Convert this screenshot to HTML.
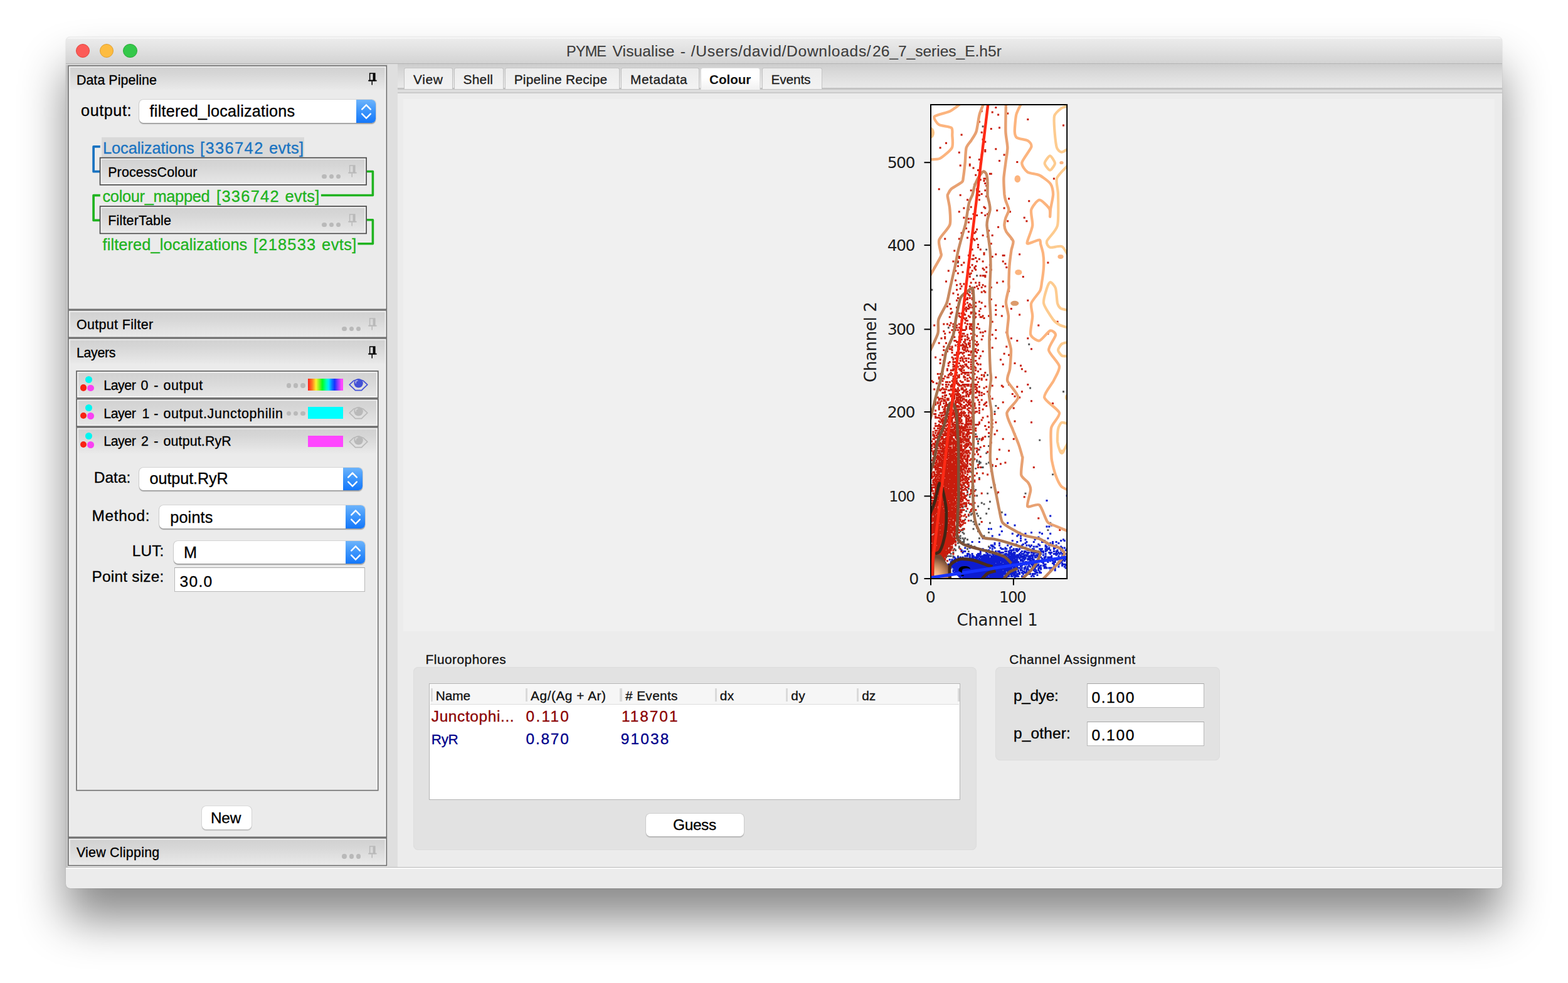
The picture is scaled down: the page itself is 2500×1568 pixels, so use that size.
<!DOCTYPE html>
<html lang="en"><head><meta charset="utf-8"><title>PYME Visualise</title>
<style>
html,body{margin:0;padding:0;background:#fff;}
body{width:2500px;height:1568px;position:relative;overflow:hidden;font-family:"Liberation Sans",sans-serif;}
.b{position:absolute;box-sizing:border-box;}
.t{position:absolute;white-space:pre;-webkit-text-stroke:0.32px currentColor;}
.t.dv{-webkit-text-stroke:0;}
.pane{background:#ebebeb;}
.hdr{background:linear-gradient(#d1d1d1,#d6d6d6 30%,#e9e9e9);}
.fold{background:linear-gradient(#d1d1d1,#d6d6d6 30%,#e8e8e8);}
.dd{background:#fff;border-radius:6.5px;box-shadow:0 0 0 0.8px rgba(0,0,0,.13),0 1.4px 1.2px rgba(0,0,0,.28);}
.ddb{background:linear-gradient(#6db4fb,#3f97fb 45%,#1477fa);border-radius:0 6.5px 6.5px 0;}
.inp{background:#fff;border:1.4px solid #b9b9b9;border-top-color:#a5a5a5;}
.btn{background:#fff;border-radius:6.5px;box-shadow:0 0 0 0.8px rgba(0,0,0,.10),0 1.2px 1.2px rgba(0,0,0,.16);}
.grp{background:#e2e2e2;border-radius:8px;box-shadow:inset 0 0 0 1px #dcdcdc;}
.tab{border:1px solid #c4c4c4;border-bottom:none;border-radius:3px 3px 0 0;background:linear-gradient(#ececec,#f3f3f3);}
</style></head>
<body>
<div class="b" style="left:105.00px;top:59.00px;width:2290.00px;height:1358.00px;background:#ececec;border-radius:7px 7px 7px 7px;box-shadow:0 50px 72px rgba(0,0,0,.46),0 0 1.2px rgba(0,0,0,.3);"></div>
<div class="b" style="left:105.00px;top:59.00px;width:2290.00px;height:42.00px;border-radius:7px 7px 0 0;background:linear-gradient(#e6e6e6,#f8f8f8 1px,#f6f6f6 2px,#ebebeb 3.5px,#e6e6e6 30%,#d4d4d4 96%,#d2d2d2);"></div>
<div class="b" style="left:105.00px;top:101.00px;width:2290.00px;height:1.00px;background:#b4b4b4;"></div>
<div class="b" style="left:120.80px;top:69.80px;width:22.60px;height:22.60px;border-radius:50%;background:#fc5b57;border:1px solid #e2463f;"></div>
<div class="b" style="left:158.60px;top:69.80px;width:22.60px;height:22.60px;border-radius:50%;background:#fdbc40;border:1px solid #e0a033;"></div>
<div class="b" style="left:196.30px;top:69.80px;width:22.60px;height:22.60px;border-radius:50%;background:#34c84a;border:1px solid #2aab38;"></div>
<span class="t" style="left:903.10px;top:67.00px;font:400 23.527336860670196px/31px 'Liberation Sans',sans-serif;letter-spacing:-0.900px;color:#3c3c3c;-webkit-text-stroke:0.12px currentColor;">PYME</span><span class="t" style="left:976.50px;top:66.00px;font:400 24.6px/32px 'Liberation Sans',sans-serif;letter-spacing:0.109px;color:#3c3c3c;-webkit-text-stroke:0.12px currentColor;">Visualise</span><span class="t" style="left:1084.66px;top:66.00px;font:400 24.6px/32px 'Liberation Sans',sans-serif;letter-spacing:0.000px;color:#3c3c3c;-webkit-text-stroke:0.12px currentColor;">-</span><span class="t" style="left:1101.80px;top:66.00px;font:400 24.6px/32px 'Liberation Sans',sans-serif;letter-spacing:0.676px;color:#3c3c3c;-webkit-text-stroke:0.12px currentColor;">/Users/david/Downloads/</span><span class="t" style="left:1391.00px;top:66.00px;font:400 24.6px/32px 'Liberation Sans',sans-serif;letter-spacing:-0.039px;color:#3c3c3c;-webkit-text-stroke:0.12px currentColor;">26_7_series_E.h5r</span>
<div class="b" style="left:617.50px;top:102.00px;width:16.50px;height:1281.00px;background:#dfdfdf;"></div>
<div class="b" style="left:105.00px;top:102.00px;width:512.50px;height:2.00px;background:#d6d6d6;"></div>
<div class="b" style="left:105.00px;top:104.00px;width:3.20px;height:1279.00px;background:#c4c4c4;"></div>
<div class="b" style="left:634.00px;top:102.00px;width:1761.00px;height:47.00px;background:linear-gradient(#cdcdcd,#d8d8d8 25%,#e6e6e6 70%,#ebebeb);"></div>
<div class="b" style="left:634.00px;top:140.00px;width:1761.00px;height:3.00px;background:#c3c3c3;"></div>
<div class="b" style="left:634.00px;top:143.00px;width:1761.00px;height:4.00px;background:#dedede;"></div>
<div class="b" style="left:634.00px;top:147.00px;width:1761.00px;height:1.80px;background:#cbcbcb;"></div>
<div class="b tab" style="left:644.30px;top:108.00px;width:77.70px;height:34.00px;"></div>
<span class="t" style="left:659.00px;top:113.00px;font:400 20.9px/27px 'Liberation Sans',sans-serif;letter-spacing:0.604px;color:#1e1e1e;">View</span>
<div class="b tab" style="left:723.70px;top:108.00px;width:79.10px;height:34.00px;"></div>
<span class="t" style="left:738.60px;top:113.00px;font:400 20.9px/27px 'Liberation Sans',sans-serif;letter-spacing:0.212px;color:#1e1e1e;">Shell</span>
<div class="b tab" style="left:804.60px;top:108.00px;width:183.10px;height:34.00px;"></div>
<span class="t" style="left:819.70px;top:113.00px;font:400 20.9px/27px 'Liberation Sans',sans-serif;letter-spacing:0.239px;color:#1e1e1e;">Pipeline Recipe</span>
<div class="b tab" style="left:990.00px;top:108.00px;width:125.10px;height:34.00px;"></div>
<span class="t" style="left:1005.10px;top:113.00px;font:400 20.9px/27px 'Liberation Sans',sans-serif;letter-spacing:0.492px;color:#1e1e1e;">Metadata</span>
<div class="b" style="left:1116.60px;top:108.00px;width:95.90px;height:35.00px;border:1px solid #dcdcdc;border-bottom:none;border-radius:4px 4px 0 0;background:linear-gradient(#ffffff,#ffffff 45%,#f1f1f1);"></div>
<span class="t dv" style="left:1131.10px;top:113.00px;font:700 20.6px/27px 'Liberation Sans',sans-serif;letter-spacing:-0.017px;color:#111;">Colour</span>
<div class="b tab" style="left:1214.90px;top:108.00px;width:95.80px;height:34.00px;"></div>
<span class="t" style="left:1229.50px;top:113.00px;font:400 20.9px/27px 'Liberation Sans',sans-serif;letter-spacing:-0.160px;color:#1e1e1e;">Events</span>
<div class="b pane" style="left:108.20px;top:104.10px;width:509.00px;height:390.10px;"></div>
<div class="b hdr" style="left:109.80px;top:105.70px;width:505.80px;height:37.50px;"></div>
<span class="t" style="left:121.90px;top:114.00px;font:400 21.4px/28px 'Liberation Sans',sans-serif;letter-spacing:0.069px;color:#000;">Data Pipeline</span>
<svg class="b" style="left:586.00px;top:116.10px" width="16" height="22" viewBox="0 0 16 22"><path d="M3.6 1.1h8.2v11.3h-8.2z" fill="none" stroke="#000" stroke-width="1.5"/><path d="M8.6 1.1h3.2v11.3h-3.2z" fill="#000"/><path d="M1.2 12.6h13.4" stroke="#000" stroke-width="1.9"/><path d="M7.2 13.4v6.2" stroke="#000" stroke-width="1.5"/></svg>
<span class="t" style="left:129.10px;top:160.00px;font:400 25.2px/33px 'Liberation Sans',sans-serif;letter-spacing:0.558px;color:#000;">output:</span>
<div class="b dd" style="left:222.40px;top:158.70px;width:376.60px;height:36.90px;"></div>
<div class="b ddb" style="left:568.00px;top:158.70px;width:31.00px;height:36.90px;"></div>
<svg class="b" style="left:571.50px;top:158.70px" width="24" height="36.90" viewBox="0 0 24 36.90"><path d="M5.2 15.4L12 8.5L18.8 15.4M5.2 22.6L12 29.5L18.8 22.6" fill="none" stroke="#fff" stroke-width="2.4" stroke-linecap="round" stroke-linejoin="miter"/></svg>
<span class="t" style="left:238.60px;top:161.00px;font:400 25.2px/33px 'Liberation Sans',sans-serif;letter-spacing:0.227px;color:#000;">filtered_localizations</span>
<div class="b" style="left:162.20px;top:218.60px;width:322.80px;height:32.20px;background:#d9d9d9;"></div>
<span class="t" style="left:164.00px;top:220.00px;font:400 25.4px/33px 'Liberation Sans',sans-serif;letter-spacing:-0.090px;color:#1a73c1;">Localizations</span><span class="t" style="left:319.00px;top:220.00px;font:400 25.4px/33px 'Liberation Sans',sans-serif;letter-spacing:1.413px;color:#1a73c1;">[336742</span><span class="t" style="left:429.00px;top:220.00px;font:400 25.4px/33px 'Liberation Sans',sans-serif;letter-spacing:0.336px;color:#1a73c1;">evts]</span>
<svg class="b" style="left:140px;top:225px" width="470" height="175" viewBox="140 225 470 175"><path d="M159.8 233.9H149.1V273.7H159.8" fill="none" stroke="#1a73c1" stroke-width="3.7" stroke-linejoin="round"/><path d="M583.5 273.5H594.4V311.5H511.9" fill="none" stroke="#1fb31f" stroke-width="3.6" stroke-linejoin="round"/><path d="M159.8 311.6H149.1V351.4H159.8" fill="none" stroke="#1fb31f" stroke-width="3.7" stroke-linejoin="round"/><path d="M583.5 350.7H594.4V388.7H570.4" fill="none" stroke="#1fb31f" stroke-width="3.6" stroke-linejoin="round"/></svg>
<div class="b fold" style="left:158.70px;top:250.80px;width:426.20px;height:44.90px;"></div>
<span class="t" style="left:172.20px;top:261.00px;font:400 21.4px/28px 'Liberation Sans',sans-serif;letter-spacing:0.164px;color:#000;">ProcessColour</span>
<div class="b" style="left:513.30px;top:277.60px;width:7.40px;height:7.40px;border-radius:50%;background:#b9b9b9;"></div>
<div class="b" style="left:524.60px;top:277.60px;width:7.40px;height:7.40px;border-radius:50%;background:#b9b9b9;"></div>
<div class="b" style="left:535.90px;top:277.60px;width:7.40px;height:7.40px;border-radius:50%;background:#b9b9b9;"></div>
<svg class="b" style="left:553.50px;top:263.20px" width="16" height="22" viewBox="0 0 16 22"><path d="M3.6 1.1h8.2v11.3h-8.2z" fill="none" stroke="#b9b9b9" stroke-width="1.5"/><path d="M8.6 1.1h3.2v11.3h-3.2z" fill="#b9b9b9"/><path d="M1.2 12.6h13.4" stroke="#b9b9b9" stroke-width="1.9"/><path d="M7.2 13.4v6.2" stroke="#b9b9b9" stroke-width="1.5"/></svg>
<span class="t" style="left:163.50px;top:297.00px;font:400 25.4px/33px 'Liberation Sans',sans-serif;letter-spacing:-0.328px;color:#1fb31f;">colour_mapped</span><span class="t" style="left:345.10px;top:297.00px;font:400 25.4px/33px 'Liberation Sans',sans-serif;letter-spacing:1.296px;color:#1fb31f;">[336742</span><span class="t" style="left:454.60px;top:297.00px;font:400 25.4px/33px 'Liberation Sans',sans-serif;letter-spacing:0.286px;color:#1fb31f;">evts]</span>
<div class="b fold" style="left:158.70px;top:328.20px;width:426.20px;height:45.10px;"></div>
<span class="t" style="left:172.20px;top:338.00px;font:400 21.4px/28px 'Liberation Sans',sans-serif;letter-spacing:0.209px;color:#000;">FilterTable</span>
<div class="b" style="left:513.30px;top:355.00px;width:7.40px;height:7.40px;border-radius:50%;background:#b9b9b9;"></div>
<div class="b" style="left:524.60px;top:355.00px;width:7.40px;height:7.40px;border-radius:50%;background:#b9b9b9;"></div>
<div class="b" style="left:535.90px;top:355.00px;width:7.40px;height:7.40px;border-radius:50%;background:#b9b9b9;"></div>
<svg class="b" style="left:553.50px;top:340.60px" width="16" height="22" viewBox="0 0 16 22"><path d="M3.6 1.1h8.2v11.3h-8.2z" fill="none" stroke="#b9b9b9" stroke-width="1.5"/><path d="M8.6 1.1h3.2v11.3h-3.2z" fill="#b9b9b9"/><path d="M1.2 12.6h13.4" stroke="#b9b9b9" stroke-width="1.9"/><path d="M7.2 13.4v6.2" stroke="#b9b9b9" stroke-width="1.5"/></svg>
<span class="t" style="left:163.50px;top:374.00px;font:400 25.4px/33px 'Liberation Sans',sans-serif;letter-spacing:0.103px;color:#1fb31f;">filtered_localizations</span><span class="t" style="left:404.10px;top:374.00px;font:400 25.4px/33px 'Liberation Sans',sans-serif;letter-spacing:1.213px;color:#1fb31f;">[218533</span><span class="t" style="left:513.10px;top:374.00px;font:400 25.4px/33px 'Liberation Sans',sans-serif;letter-spacing:0.411px;color:#1fb31f;">evts]</span>
<div class="b pane" style="left:108.20px;top:494.20px;width:509.00px;height:44.90px;"></div>
<div class="b hdr" style="left:109.80px;top:495.80px;width:505.80px;height:41.50px;"></div>
<span class="t" style="left:121.90px;top:504.00px;font:400 21.4px/28px 'Liberation Sans',sans-serif;letter-spacing:0.387px;color:#000;">Output Filter</span>
<div class="b" style="left:545.40px;top:520.50px;width:7.40px;height:7.40px;border-radius:50%;background:#b9b9b9;"></div>
<div class="b" style="left:556.70px;top:520.50px;width:7.40px;height:7.40px;border-radius:50%;background:#b9b9b9;"></div>
<div class="b" style="left:568.00px;top:520.50px;width:7.40px;height:7.40px;border-radius:50%;background:#b9b9b9;"></div>
<svg class="b" style="left:586.00px;top:507.00px" width="16" height="22" viewBox="0 0 16 22"><path d="M3.6 1.1h8.2v11.3h-8.2z" fill="none" stroke="#b9b9b9" stroke-width="1.5"/><path d="M8.6 1.1h3.2v11.3h-3.2z" fill="#b9b9b9"/><path d="M1.2 12.6h13.4" stroke="#b9b9b9" stroke-width="1.9"/><path d="M7.2 13.4v6.2" stroke="#b9b9b9" stroke-width="1.5"/></svg>
<div class="b pane" style="left:108.20px;top:539.10px;width:509.00px;height:797.00px;"></div>
<div class="b hdr" style="left:109.80px;top:540.70px;width:505.80px;height:39.00px;"></div>
<span class="t" style="left:121.90px;top:549.00px;font:400 21.4px/28px 'Liberation Sans',sans-serif;letter-spacing:-0.311px;color:#000;">Layers</span>
<svg class="b" style="left:586.00px;top:552.40px" width="16" height="22" viewBox="0 0 16 22"><path d="M3.6 1.1h8.2v11.3h-8.2z" fill="none" stroke="#000" stroke-width="1.5"/><path d="M8.6 1.1h3.2v11.3h-3.2z" fill="#000"/><path d="M1.2 12.6h13.4" stroke="#000" stroke-width="1.9"/><path d="M7.2 13.4v6.2" stroke="#000" stroke-width="1.5"/></svg>
<div class="b fold" style="left:121.20px;top:591.10px;width:482.40px;height:44.60px;"></div>
<div class="b" style="left:135.80px;top:600.00px;width:11.20px;height:11.20px;border-radius:50%;background:#00f5f0;"></div>
<div class="b" style="left:127.50px;top:613.30px;width:10.60px;height:10.60px;border-radius:50%;background:#f82312;"></div>
<div class="b" style="left:139.30px;top:613.80px;width:10.60px;height:10.60px;border-radius:50%;background:#f940f3;"></div>
<span class="t" style="left:165.20px;top:601.00px;font:400 21.4px/28px 'Liberation Sans',sans-serif;letter-spacing:-0.438px;color:#000;">Layer</span><span class="t" style="left:224.46px;top:601.00px;font:400 21.4px/28px 'Liberation Sans',sans-serif;letter-spacing:0.000px;color:#000;">0</span><span class="t" style="left:245.14px;top:601.00px;font:400 21.4px/28px 'Liberation Sans',sans-serif;letter-spacing:0.000px;color:#000;">-</span><span class="t" style="left:260.50px;top:601.00px;font:400 21.4px/28px 'Liberation Sans',sans-serif;letter-spacing:0.642px;color:#000;">output</span>
<div class="b" style="left:456.60px;top:611.40px;width:7.40px;height:7.40px;border-radius:50%;background:#b9b9b9;"></div>
<div class="b" style="left:467.90px;top:611.40px;width:7.40px;height:7.40px;border-radius:50%;background:#b9b9b9;"></div>
<div class="b" style="left:479.20px;top:611.40px;width:7.40px;height:7.40px;border-radius:50%;background:#b9b9b9;"></div>
<div class="b" style="left:490.80px;top:603.80px;width:56.30px;height:18.90px;background:linear-gradient(90deg,#ff1f1f,#ff7a1f 12%,#fff22e 23%,#7df01f 33%,#00ff1f 41%,#00ffb4 52%,#00e8ff 59%,#0a7bff 68%,#1733ff 76%,#8a3cff 85%,#ff46ff 95%);"></div>
<svg class="b" style="left:555.70px;top:603.10px" width="32" height="23" viewBox="0 0 32 23"><path d="M1.2 10.6L7.5 4.6Q15.5 0.6 23.5 4.6L29.8 10.6L23.5 16.6L20.5 19.6H10.5L7.5 16.6Z" fill="none" stroke="#4351d6" stroke-width="1.7" stroke-linejoin="round"/><circle cx="15.6" cy="8.3" r="7.2" fill="#4351d6"/><path d="M11.2 8.4V5.2Q11.6 4.2 13.2 4.2H14.6" fill="none" stroke="#e6e6e6" stroke-width="1.1"/></svg>
<div class="b fold" style="left:121.20px;top:635.70px;width:482.40px;height:45.30px;"></div>
<div class="b" style="left:135.80px;top:644.60px;width:11.20px;height:11.20px;border-radius:50%;background:#00f5f0;"></div>
<div class="b" style="left:127.50px;top:657.90px;width:10.60px;height:10.60px;border-radius:50%;background:#f82312;"></div>
<div class="b" style="left:139.30px;top:658.40px;width:10.60px;height:10.60px;border-radius:50%;background:#f940f3;"></div>
<span class="t" style="left:165.20px;top:646.00px;font:400 21.4px/28px 'Liberation Sans',sans-serif;letter-spacing:-0.438px;color:#000;">Layer</span><span class="t" style="left:226.56px;top:646.00px;font:400 21.4px/28px 'Liberation Sans',sans-serif;letter-spacing:0.000px;color:#000;">1</span><span class="t" style="left:245.14px;top:646.00px;font:400 21.4px/28px 'Liberation Sans',sans-serif;letter-spacing:0.000px;color:#000;">-</span><span class="t" style="left:260.50px;top:646.00px;font:400 21.4px/28px 'Liberation Sans',sans-serif;letter-spacing:0.662px;color:#000;">output.Junctophilin</span>
<div class="b" style="left:456.60px;top:656.00px;width:7.40px;height:7.40px;border-radius:50%;background:#b9b9b9;"></div>
<div class="b" style="left:467.90px;top:656.00px;width:7.40px;height:7.40px;border-radius:50%;background:#b9b9b9;"></div>
<div class="b" style="left:479.20px;top:656.00px;width:7.40px;height:7.40px;border-radius:50%;background:#b9b9b9;"></div>
<div class="b" style="left:490.80px;top:648.90px;width:56.30px;height:18.90px;background:#00ffff;"></div>
<svg class="b" style="left:555.70px;top:647.70px" width="32" height="23" viewBox="0 0 32 23"><path d="M1.2 10.6L7.5 4.6Q15.5 0.6 23.5 4.6L29.8 10.6L23.5 16.6L20.5 19.6H10.5L7.5 16.6Z" fill="none" stroke="#b9b9b9" stroke-width="1.7" stroke-linejoin="round"/><circle cx="15.6" cy="8.3" r="7.2" fill="#b9b9b9"/><path d="M11.2 8.4V5.2Q11.6 4.2 13.2 4.2H14.6" fill="none" stroke="#e6e6e6" stroke-width="1.1"/></svg>
<div class="b" style="left:121.20px;top:681.00px;width:482.40px;height:580.60px;background:#ebebeb;"></div>
<div class="b" style="left:122.90px;top:682.70px;width:479.00px;height:41.30px;background:linear-gradient(#d1d1d1,#d6d6d6 30%,#e9e9e9 95%,#ebebeb);"></div>
<div class="b" style="left:135.80px;top:690.30px;width:11.20px;height:11.20px;border-radius:50%;background:#00f5f0;"></div>
<div class="b" style="left:127.50px;top:703.60px;width:10.60px;height:10.60px;border-radius:50%;background:#f82312;"></div>
<div class="b" style="left:139.30px;top:704.10px;width:10.60px;height:10.60px;border-radius:50%;background:#f940f3;"></div>
<span class="t" style="left:165.20px;top:690.00px;font:400 21.4px/28px 'Liberation Sans',sans-serif;letter-spacing:-0.438px;color:#000;">Layer</span><span class="t" style="left:225.11px;top:690.00px;font:400 21.4px/28px 'Liberation Sans',sans-serif;letter-spacing:0.000px;color:#000;">2</span><span class="t" style="left:245.14px;top:690.00px;font:400 21.4px/28px 'Liberation Sans',sans-serif;letter-spacing:0.000px;color:#000;">-</span><span class="t" style="left:260.50px;top:690.00px;font:400 21.4px/28px 'Liberation Sans',sans-serif;letter-spacing:0.139px;color:#000;">output.RyR</span>
<div class="b" style="left:490.80px;top:694.60px;width:56.30px;height:18.60px;background:#ff46ff;"></div>
<svg class="b" style="left:555.70px;top:693.60px" width="32" height="23" viewBox="0 0 32 23"><path d="M1.2 10.6L7.5 4.6Q15.5 0.6 23.5 4.6L29.8 10.6L23.5 16.6L20.5 19.6H10.5L7.5 16.6Z" fill="none" stroke="#b9b9b9" stroke-width="1.7" stroke-linejoin="round"/><circle cx="15.6" cy="8.3" r="7.2" fill="#b9b9b9"/><path d="M11.2 8.4V5.2Q11.6 4.2 13.2 4.2H14.6" fill="none" stroke="#e6e6e6" stroke-width="1.1"/></svg>
<span class="t" style="left:149.80px;top:746.00px;font:400 24.4px/32px 'Liberation Sans',sans-serif;letter-spacing:0.046px;color:#000;">Data:</span>
<div class="b dd" style="left:222.40px;top:745.50px;width:355.40px;height:36.80px;"></div>
<div class="b ddb" style="left:546.80px;top:745.50px;width:31.00px;height:36.80px;"></div>
<svg class="b" style="left:550.30px;top:745.50px" width="24" height="36.80" viewBox="0 0 24 36.80"><path d="M5.2 15.4L12 8.5L18.8 15.4M5.2 22.6L12 29.5L18.8 22.6" fill="none" stroke="#fff" stroke-width="2.4" stroke-linecap="round" stroke-linejoin="miter"/></svg>
<span class="t" style="left:238.60px;top:747.00px;font:400 25.2px/33px 'Liberation Sans',sans-serif;letter-spacing:-0.096px;color:#000;">output.RyR</span>
<span class="t" style="left:146.50px;top:807.00px;font:400 24.4px/32px 'Liberation Sans',sans-serif;letter-spacing:0.659px;color:#000;">Method:</span>
<div class="b dd" style="left:254.30px;top:806.10px;width:327.70px;height:36.90px;"></div>
<div class="b ddb" style="left:551.00px;top:806.10px;width:31.00px;height:36.90px;"></div>
<svg class="b" style="left:554.50px;top:806.10px" width="24" height="36.90" viewBox="0 0 24 36.90"><path d="M5.2 15.4L12 8.5L18.8 15.4M5.2 22.6L12 29.5L18.8 22.6" fill="none" stroke="#fff" stroke-width="2.4" stroke-linecap="round" stroke-linejoin="miter"/></svg>
<span class="t" style="left:271.20px;top:809.00px;font:400 25.2px/33px 'Liberation Sans',sans-serif;letter-spacing:0.196px;color:#000;">points</span>
<span class="t" style="left:210.70px;top:863.00px;font:400 24.4px/32px 'Liberation Sans',sans-serif;letter-spacing:0.132px;color:#000;">LUT:</span>
<div class="b dd" style="left:276.70px;top:862.60px;width:305.30px;height:36.90px;"></div>
<div class="b ddb" style="left:551.00px;top:862.60px;width:31.00px;height:36.90px;"></div>
<svg class="b" style="left:554.50px;top:862.60px" width="24" height="36.90" viewBox="0 0 24 36.90"><path d="M5.2 15.4L12 8.5L18.8 15.4M5.2 22.6L12 29.5L18.8 22.6" fill="none" stroke="#fff" stroke-width="2.4" stroke-linecap="round" stroke-linejoin="miter"/></svg>
<span class="t" style="left:292.96px;top:865.00px;font:400 25.2px/33px 'Liberation Sans',sans-serif;letter-spacing:0.000px;color:#000;">M</span>
<span class="t" style="left:146.50px;top:904.00px;font:400 24.4px/32px 'Liberation Sans',sans-serif;letter-spacing:0.226px;color:#000;">Point size:</span>
<div class="b inp" style="left:277.70px;top:905.00px;width:304.60px;height:39.20px;"></div>
<span class="t" style="left:286.60px;top:912.00px;font:400 24.6px/32px 'Liberation Sans',sans-serif;letter-spacing:1.230px;color:#000;">30.0</span>
<div class="b btn" style="left:322.20px;top:1286.10px;width:78.40px;height:36.90px;"></div>
<span class="t" style="left:335.90px;top:1289.00px;font:400 24.4px/32px 'Liberation Sans',sans-serif;letter-spacing:-0.180px;color:#000;">New</span>
<div class="b pane" style="left:108.20px;top:1336.10px;width:509.00px;height:45.30px;"></div>
<div class="b hdr" style="left:109.80px;top:1337.70px;width:505.80px;height:41.50px;"></div>
<span class="t" style="left:121.90px;top:1346.00px;font:400 21.4px/28px 'Liberation Sans',sans-serif;letter-spacing:0.262px;color:#000;">View Clipping</span>
<div class="b" style="left:545.40px;top:1362.30px;width:7.40px;height:7.40px;border-radius:50%;background:#b9b9b9;"></div>
<div class="b" style="left:556.70px;top:1362.30px;width:7.40px;height:7.40px;border-radius:50%;background:#b9b9b9;"></div>
<div class="b" style="left:568.00px;top:1362.30px;width:7.40px;height:7.40px;border-radius:50%;background:#b9b9b9;"></div>
<svg class="b" style="left:586.00px;top:1348.80px" width="16" height="22" viewBox="0 0 16 22"><path d="M3.6 1.1h8.2v11.3h-8.2z" fill="none" stroke="#b9b9b9" stroke-width="1.5"/><path d="M8.6 1.1h3.2v11.3h-3.2z" fill="#b9b9b9"/><path d="M1.2 12.6h13.4" stroke="#b9b9b9" stroke-width="1.9"/><path d="M7.2 13.4v6.2" stroke="#b9b9b9" stroke-width="1.5"/></svg>
<svg class="b" style="left:100px;top:100px" width="530" height="1290" viewBox="100 100 530 1290"><path d="M110.75 492.60V106.65H614.65V492.60" fill="none" stroke="#f4f4f4" stroke-width="1.9"/><rect x="109.00" y="104.90" width="507.40" height="388.50" fill="none" stroke="#6c6c6c" stroke-width="1.6"/><rect x="161.30" y="253.40" width="421.00" height="39.70" fill="none" stroke="#f4f4f4" stroke-width="1.8"/><rect x="159.55" y="251.65" width="424.50" height="43.20" fill="none" stroke="#4c4c4c" stroke-width="1.7"/><rect x="161.30" y="330.80" width="421.00" height="39.90" fill="none" stroke="#f4f4f4" stroke-width="1.8"/><rect x="159.55" y="329.05" width="424.50" height="43.40" fill="none" stroke="#4c4c4c" stroke-width="1.7"/><path d="M110.75 537.50V496.75H614.65V537.50" fill="none" stroke="#f4f4f4" stroke-width="1.9"/><rect x="109.00" y="495.00" width="507.40" height="43.30" fill="none" stroke="#6c6c6c" stroke-width="1.6"/><path d="M110.75 1334.50V541.65H614.65V1334.50" fill="none" stroke="#f4f4f4" stroke-width="1.9"/><rect x="109.00" y="539.90" width="507.40" height="795.40" fill="none" stroke="#6c6c6c" stroke-width="1.6"/><rect x="123.85" y="593.75" width="477.10" height="39.30" fill="none" stroke="#f4f4f4" stroke-width="1.9"/><rect x="122.05" y="591.95" width="480.70" height="42.90" fill="none" stroke="#666" stroke-width="1.7"/><rect x="123.85" y="638.35" width="477.10" height="40.00" fill="none" stroke="#f4f4f4" stroke-width="1.9"/><rect x="122.05" y="636.55" width="480.70" height="43.60" fill="none" stroke="#666" stroke-width="1.7"/><path d="M123.85 1259.90V683.65H600.95V1259.90" fill="none" stroke="#f4f4f4" stroke-width="1.9"/><rect x="122.05" y="681.85" width="480.70" height="578.90" fill="none" stroke="#747474" stroke-width="1.7"/><path d="M110.75 1379.80V1338.65H614.65V1379.80" fill="none" stroke="#f4f4f4" stroke-width="1.9"/><rect x="109.00" y="1336.90" width="507.40" height="43.70" fill="none" stroke="#6c6c6c" stroke-width="1.6"/></svg>
<div class="b" style="left:105.00px;top:1382.60px;width:2290.00px;height:1.40px;background:#b9b9b9;"></div>
<div class="b" style="left:105.00px;top:1384.00px;width:2290.00px;height:1.60px;background:#fafafa;"></div>
<div class="b" style="left:642.80px;top:158.30px;width:1740.10px;height:849.10px;background:#f0f0f0;"></div>
<svg class="b" style="left:1350px;top:150px" width="420" height="870" viewBox="1350 150 420 870">
<defs>
<clipPath id="ax"><rect x="1484.0" y="167.0" width="217.20000000000005" height="756.0"/></clipPath>
<radialGradient id="og" gradientUnits="userSpaceOnUse" cx="1487" cy="921" r="33"><stop offset="0" stop-color="#ffd9a8"/><stop offset="0.35" stop-color="#f3b482"/><stop offset="0.7" stop-color="#b57c56"/><stop offset="1" stop-color="#6f4630"/></radialGradient>
<filter id="bl" x="-5%" y="-5%" width="110%" height="110%"><feGaussianBlur stdDeviation="0.7"/></filter>
</defs>
<rect x="1484.0" y="167.0" width="217.20000000000005" height="756.0" fill="#fff"/>
<g clip-path="url(#ax)"><g filter="url(#bl)">
<path d="M1546.3 915.4h0M1518.0 900.3h0M1518.0 894.7h0M1506.7 892.8h0M1527.4 892.8h0M1508.5 889.0h0M1519.9 889.0h0M1506.7 887.1h0M1510.4 887.1h5.7M1519.9 887.1h0M1527.4 887.1h0M1502.9 885.2h0M1508.5 885.2h0M1491.6 883.4h0M1504.8 883.4h0M1510.4 883.4h0M1516.1 883.4h0M1506.7 881.5h0M1510.4 881.5h3.8M1519.9 881.5h0M1512.3 879.6h0M1533.1 879.6h0M1544.4 879.6h0M1514.2 877.7h0M1523.6 877.7h0M1669.0 877.7h0M1516.1 875.8h0M1521.8 875.8h0M1542.5 875.8h0M1518.0 873.9h0M1529.3 873.9h0M1514.2 872.0h0M1529.3 872.0h0M1553.9 872.0h0M1576.5 872.0h0M1523.6 870.1h0M1540.6 870.1h0M1548.2 870.1h0M1542.5 868.2h1.9M1527.4 866.4h0M1512.3 864.5h1.9M1535.0 864.5h1.9M1523.6 862.6h0M1529.3 862.6h1.9M1536.9 862.6h0M1518.0 860.7h0M1536.9 860.7h0M1542.5 860.7h0M1527.4 858.8h0M1531.2 858.8h0M1535.0 858.8h0M1538.8 858.8h0M1561.4 858.8h0M1521.8 856.9h0M1525.5 856.9h0M1529.3 856.9h0M1516.1 855.0h0M1531.2 855.0h0M1569.0 855.0h0M1523.6 853.1h1.9M1536.9 851.3h0M1518.0 849.4h0M1527.4 849.4h0M1535.0 849.4h0M1576.5 849.4h0M1525.5 847.5h0M1531.2 847.5h0M1559.5 847.5h0M1535.0 845.6h0M1670.9 845.6h0M1523.6 843.7h0M1535.0 843.7h1.9M1552.0 843.7h0M1557.6 841.8h0M1531.2 839.9h0M1553.9 836.2h0M1561.4 836.2h0M1578.4 834.3h0M1674.7 834.3h0M1552.0 832.4h0M1555.7 832.4h0M1536.9 830.5h0M1548.2 830.5h0M1538.8 828.6h0M1563.3 826.7h0M1544.4 822.9h0M1559.5 822.9h0M1516.1 821.0h0M1548.2 821.0h0M1550.1 819.2h0M1557.6 819.2h0M1572.7 819.2h0M1531.2 817.3h0M1546.3 817.3h0M1597.3 817.3h0M1533.1 815.4h0M1540.6 815.4h0M1542.5 811.6h0M1576.5 811.6h0M1535.0 809.7h0M1538.8 807.8h0M1559.5 807.8h0M1546.3 804.1h0M1569.0 804.1h0M1565.2 802.2h0M1578.4 800.3h0M1546.3 792.7h0M1557.6 790.8h0M1542.5 789.0h0M1574.6 787.1h0M1589.7 787.1h0M1635.0 787.1h0M1533.1 785.2h0M1550.1 785.2h0M1542.5 783.3h0M1536.9 781.4h0M1555.7 781.4h0M1533.1 779.5h0M1544.4 779.5h0M1552.0 779.5h0M1580.3 777.6h0M1552.0 775.7h0M1536.9 773.8h0M1586.0 773.8h0M1536.9 772.0h0M1544.4 762.5h0M1561.4 762.5h0M1678.5 756.9h0M1548.2 753.1h0M1533.1 751.2h0M1542.5 751.2h0M1555.7 747.4h0M1565.2 745.5h1.9M1540.6 743.6h0M1582.2 743.6h0M1561.4 739.9h0M1572.7 739.9h0M1561.4 738.0h1.9M1576.5 738.0h0M1557.6 736.1h0M1561.4 736.1h0M1550.1 734.2h0M1557.6 734.2h0M1552.0 730.4h0M1572.7 722.9h0M1557.6 719.1h0M1561.4 717.2h0M1576.5 711.5h0M1559.5 707.8h0M1552.0 704.0h0M1540.6 702.1h0M1657.7 702.1h0M1544.4 700.2h0M1557.6 700.2h0M1561.4 700.2h0M1576.5 696.4h0M1555.7 692.7h0M1557.6 677.6h0M1580.3 675.7h0M1550.1 671.9h0M1586.0 656.8h0M1587.8 647.4h0M1695.5 624.7h0M1642.6 619.0h0M1574.6 598.3h0M1640.7 549.2h0M1512.3 522.7h0M1516.1 500.1h0M1546.3 466.1h0M1485.9 462.3h0M1557.6 439.7h0M1527.4 418.9h0M1572.7 398.1h0M1612.4 381.1h0M1567.1 201.8h0" stroke="#555" stroke-width="2.9" stroke-linecap="square" fill="none"/>
<path d="M1531.2 921.1h0M1514.2 904.1h0M1518.0 902.2h0M1536.9 900.3h0M1502.9 896.6h0M1502.9 894.7h0M1510.4 894.7h0M1499.1 892.8h0M1502.9 892.8h0M1506.7 892.8h0M1614.3 892.8h0M1495.3 890.9h1.9M1501.0 890.9h5.7M1497.2 889.0h7.6M1495.3 887.1h13.2M1491.6 885.2h15.1M1491.6 883.4h18.9M1519.9 883.4h0M1487.8 881.5h1.9M1493.4 881.5h20.8M1485.9 879.6h1.9M1491.6 879.6h22.7M1533.1 879.6h0M1485.9 877.7h20.8M1510.4 877.7h1.9M1516.1 877.7h0M1519.9 877.7h0M1485.9 875.8h24.5M1514.2 875.8h0M1531.2 875.8h0M1485.9 873.9h24.5M1516.1 873.9h1.9M1485.9 872.0h15.1M1504.8 872.0h13.2M1485.9 870.1h5.7M1495.3 870.1h5.7M1504.8 870.1h9.4M1485.9 868.2h32.1M1523.6 868.2h0M1487.8 866.4h32.1M1485.9 864.5h37.8M1485.9 862.6h1.9M1491.6 862.6h30.2M1527.4 862.6h0M1485.9 860.7h3.8M1493.4 860.7h28.3M1485.9 858.8h37.8M1485.9 856.9h18.9M1508.5 856.9h9.4M1485.9 855.0h30.2M1519.9 855.0h1.9M1525.5 855.0h1.9M1489.7 853.1h7.6M1501.0 853.1h15.1M1519.9 853.1h1.9M1485.9 851.3h0M1491.6 851.3h22.7M1519.9 851.3h3.8M1485.9 849.4h5.7M1495.3 849.4h22.7M1521.8 849.4h0M1525.5 849.4h3.8M1485.9 847.5h22.7M1512.3 847.5h5.7M1521.8 847.5h1.9M1485.9 845.6h11.3M1501.0 845.6h28.3M1533.1 845.6h0M1689.8 845.6h0M1485.9 843.7h28.3M1518.0 843.7h3.8M1527.4 843.7h0M1536.9 843.7h0M1485.9 841.8h37.8M1485.9 839.9h30.2M1521.8 839.9h1.9M1531.2 839.9h0M1485.9 838.0h11.3M1501.0 838.0h13.2M1518.0 838.0h3.8M1525.5 838.0h7.6M1485.9 836.2h15.1M1504.8 836.2h17.0M1531.2 836.2h0M1535.0 836.2h0M1489.7 834.3h5.7M1499.1 834.3h11.3M1514.2 834.3h7.6M1527.4 834.3h1.9M1536.9 834.3h1.9M1485.9 832.4h0M1489.7 832.4h32.1M1525.5 832.4h0M1529.3 832.4h0M1533.1 832.4h1.9M1565.2 832.4h0M1485.9 830.5h26.4M1516.1 830.5h1.9M1521.8 830.5h1.9M1527.4 830.5h0M1531.2 830.5h0M1535.0 830.5h1.9M1544.4 830.5h0M1485.9 828.6h32.1M1521.8 828.6h1.9M1529.3 828.6h1.9M1485.9 826.7h24.5M1514.2 826.7h0M1518.0 826.7h7.6M1529.3 826.7h0M1655.8 826.7h0M1485.9 824.8h0M1489.7 824.8h41.5M1540.6 824.8h0M1485.9 822.9h0M1489.7 822.9h37.8M1533.1 822.9h0M1536.9 822.9h0M1485.9 821.0h3.8M1493.4 821.0h37.8M1538.8 821.0h0M1544.4 821.0h0M1485.9 819.2h5.7M1495.3 819.2h26.4M1525.5 819.2h3.8M1485.9 817.3h7.6M1497.2 817.3h7.6M1508.5 817.3h15.1M1527.4 817.3h5.7M1485.9 815.4h24.5M1514.2 815.4h9.4M1531.2 815.4h0M1548.2 815.4h0M1485.9 813.5h30.2M1519.9 813.5h7.6M1531.2 813.5h5.7M1548.2 813.5h0M1555.7 813.5h0M1485.9 811.6h7.6M1497.2 811.6h5.7M1506.7 811.6h20.8M1542.5 811.6h0M1550.1 811.6h0M1489.7 809.7h0M1493.4 809.7h0M1497.2 809.7h7.6M1508.5 809.7h13.2M1525.5 809.7h5.7M1485.9 807.8h1.9M1491.6 807.8h1.9M1497.2 807.8h3.8M1504.8 807.8h11.3M1519.9 807.8h0M1523.6 807.8h1.9M1529.3 807.8h0M1533.1 807.8h1.9M1540.6 807.8h0M1487.8 805.9h34.0M1525.5 805.9h0M1529.3 805.9h3.8M1540.6 805.9h0M1550.1 805.9h0M1485.9 804.1h37.8M1527.4 804.1h0M1531.2 804.1h9.4M1548.2 804.1h0M1485.9 802.2h26.4M1516.1 802.2h9.4M1529.3 802.2h0M1536.9 802.2h3.8M1544.4 802.2h0M1553.9 802.2h0M1487.8 800.3h1.9M1493.4 800.3h9.4M1506.7 800.3h11.3M1521.8 800.3h1.9M1527.4 800.3h5.7M1552.0 800.3h0M1485.9 798.4h1.9M1491.6 798.4h1.9M1497.2 798.4h13.2M1514.2 798.4h7.6M1525.5 798.4h5.7M1535.0 798.4h0M1542.5 798.4h1.9M1491.6 796.5h30.2M1525.5 796.5h9.4M1540.6 796.5h0M1485.9 794.6h47.2M1536.9 794.6h1.9M1485.9 792.7h0M1489.7 792.7h30.2M1523.6 792.7h0M1527.4 792.7h1.9M1533.1 792.7h5.7M1633.2 792.7h0M1489.7 790.8h1.9M1497.2 790.8h35.9M1538.8 790.8h1.9M1553.9 790.8h0M1489.7 789.0h43.4M1536.9 789.0h0M1546.3 789.0h0M1487.8 787.1h28.3M1519.9 787.1h5.7M1529.3 787.1h7.6M1548.2 787.1h0M1552.0 787.1h0M1565.2 787.1h0M1491.6 785.2h32.1M1527.4 785.2h0M1531.2 785.2h0M1542.5 785.2h0M1591.6 785.2h0M1485.9 783.3h1.9M1491.6 783.3h0M1497.2 783.3h28.3M1529.3 783.3h0M1533.1 783.3h0M1548.2 783.3h0M1553.9 783.3h0M1485.9 781.4h0M1491.6 781.4h0M1495.3 781.4h34.0M1533.1 781.4h3.8M1540.6 781.4h0M1548.2 781.4h0M1485.9 779.5h0M1491.6 779.5h0M1495.3 779.5h15.1M1514.2 779.5h3.8M1521.8 779.5h5.7M1531.2 779.5h0M1538.8 779.5h0M1485.9 777.6h15.1M1504.8 777.6h1.9M1510.4 777.6h18.9M1533.1 777.6h1.9M1540.6 777.6h1.9M1550.1 777.6h0M1491.6 775.7h11.3M1506.7 775.7h18.9M1533.1 775.7h0M1538.8 775.7h0M1544.4 775.7h0M1485.9 773.8h41.5M1531.2 773.8h3.8M1544.4 773.8h0M1489.7 772.0h5.7M1499.1 772.0h1.9M1504.8 772.0h5.7M1514.2 772.0h5.7M1523.6 772.0h7.6M1536.9 772.0h0M1542.5 772.0h0M1487.8 770.1h1.9M1493.4 770.1h35.9M1535.0 770.1h9.4M1487.8 768.2h0M1491.6 768.2h39.6M1540.6 768.2h1.9M1548.2 768.2h0M1553.9 768.2h0M1487.8 766.3h5.7M1497.2 766.3h30.2M1531.2 766.3h3.8M1538.8 766.3h0M1542.5 766.3h0M1553.9 766.3h0M1489.7 764.4h22.7M1516.1 764.4h15.1M1535.0 764.4h1.9M1540.6 764.4h0M1544.4 764.4h0M1561.4 764.4h0M1485.9 762.5h0M1491.6 762.5h0M1495.3 762.5h0M1499.1 762.5h5.7M1508.5 762.5h18.9M1531.2 762.5h0M1535.0 762.5h0M1538.8 762.5h3.8M1485.9 760.6h1.9M1491.6 760.6h1.9M1497.2 760.6h30.2M1531.2 760.6h3.8M1538.8 760.6h1.9M1546.3 760.6h0M1485.9 758.7h0M1489.7 758.7h0M1493.4 758.7h1.9M1499.1 758.7h22.7M1525.5 758.7h3.8M1533.1 758.7h3.8M1553.9 758.7h0M1485.9 756.9h0M1489.7 756.9h41.5M1535.0 756.9h0M1542.5 756.9h0M1574.6 756.9h0M1485.9 755.0h0M1489.7 755.0h0M1495.3 755.0h1.9M1502.9 755.0h7.6M1514.2 755.0h17.0M1535.0 755.0h0M1538.8 755.0h0M1557.6 755.0h0M1567.1 755.0h0M1487.8 753.1h1.9M1493.4 753.1h34.0M1533.1 753.1h1.9M1538.8 753.1h0M1542.5 753.1h1.9M1495.3 751.2h20.8M1519.9 751.2h11.3M1538.8 751.2h0M1542.5 751.2h0M1546.3 751.2h0M1550.1 751.2h0M1580.3 751.2h0M1491.6 749.3h3.8M1499.1 749.3h37.8M1544.4 749.3h0M1491.6 747.4h7.6M1502.9 747.4h5.7M1512.3 747.4h13.2M1531.2 747.4h1.9M1536.9 747.4h0M1540.6 747.4h0M1544.4 747.4h1.9M1489.7 745.5h5.7M1502.9 745.5h0M1506.7 745.5h26.4M1536.9 745.5h3.8M1559.5 745.5h0M1563.3 745.5h0M1648.3 745.5h0M1489.7 743.6h1.9M1495.3 743.6h30.2M1529.3 743.6h13.2M1587.8 743.6h0M1487.8 741.8h0M1493.4 741.8h15.1M1512.3 741.8h9.4M1525.5 741.8h3.8M1535.0 741.8h1.9M1540.6 741.8h0M1548.2 741.8h0M1559.5 741.8h0M1582.2 741.8h0M1485.9 739.9h1.9M1491.6 739.9h0M1495.3 739.9h9.4M1508.5 739.9h20.8M1533.1 739.9h1.9M1538.8 739.9h0M1542.5 739.9h0M1546.3 739.9h0M1595.4 739.9h0M1491.6 738.0h1.9M1497.2 738.0h7.6M1508.5 738.0h7.6M1519.9 738.0h13.2M1536.9 738.0h0M1542.5 738.0h0M1550.1 738.0h0M1602.9 738.0h0M1489.7 736.1h0M1493.4 736.1h0M1497.2 736.1h0M1501.0 736.1h3.8M1508.5 736.1h7.6M1519.9 736.1h15.1M1540.6 736.1h1.9M1485.9 734.2h0M1493.4 734.2h0M1497.2 734.2h22.7M1523.6 734.2h7.6M1535.0 734.2h0M1540.6 734.2h1.9M1546.3 734.2h0M1552.0 734.2h0M1487.8 732.3h0M1495.3 732.3h5.7M1504.8 732.3h1.9M1512.3 732.3h15.1M1533.1 732.3h1.9M1538.8 732.3h3.8M1548.2 732.3h0M1552.0 732.3h1.9M1589.7 732.3h0M1487.8 730.4h1.9M1493.4 730.4h5.7M1502.9 730.4h7.6M1514.2 730.4h18.9M1536.9 730.4h0M1542.5 730.4h0M1489.7 728.5h7.6M1501.0 728.5h22.7M1527.4 728.5h0M1531.2 728.5h1.9M1536.9 728.5h1.9M1542.5 728.5h1.9M1563.3 728.5h0M1489.7 726.6h1.9M1495.3 726.6h0M1499.1 726.6h3.8M1506.7 726.6h3.8M1514.2 726.6h7.6M1525.5 726.6h1.9M1531.2 726.6h3.8M1538.8 726.6h0M1542.5 726.6h1.9M1487.8 724.8h0M1491.6 724.8h0M1499.1 724.8h17.0M1519.9 724.8h15.1M1553.9 724.8h0M1559.5 724.8h0M1487.8 722.9h0M1495.3 722.9h3.8M1504.8 722.9h5.7M1514.2 722.9h5.7M1523.6 722.9h1.9M1531.2 722.9h1.9M1536.9 722.9h0M1540.6 722.9h1.9M1546.3 722.9h0M1552.0 722.9h0M1487.8 721.0h3.8M1497.2 721.0h0M1501.0 721.0h20.8M1529.3 721.0h0M1535.0 721.0h0M1538.8 721.0h1.9M1544.4 721.0h0M1557.6 721.0h0M1574.6 721.0h0M1485.9 719.1h0M1489.7 719.1h0M1495.3 719.1h13.2M1512.3 719.1h15.1M1531.2 719.1h5.7M1540.6 719.1h3.8M1608.6 719.1h0M1491.6 717.2h0M1502.9 717.2h1.9M1508.5 717.2h18.9M1531.2 717.2h5.7M1548.2 717.2h0M1559.5 717.2h0M1593.5 717.2h0M1485.9 715.3h0M1493.4 715.3h1.9M1499.1 715.3h11.3M1514.2 715.3h1.9M1519.9 715.3h13.2M1538.8 715.3h0M1548.2 715.3h0M1553.9 715.3h0M1557.6 715.3h0M1489.7 713.4h3.8M1499.1 713.4h0M1502.9 713.4h0M1506.7 713.4h9.4M1519.9 713.4h3.8M1527.4 713.4h0M1531.2 713.4h1.9M1538.8 713.4h1.9M1546.3 713.4h0M1563.3 713.4h0M1485.9 711.5h0M1491.6 711.5h0M1497.2 711.5h1.9M1502.9 711.5h1.9M1508.5 711.5h3.8M1519.9 711.5h0M1523.6 711.5h1.9M1529.3 711.5h3.8M1536.9 711.5h0M1540.6 711.5h1.9M1569.0 711.5h0M1485.9 709.7h0M1489.7 709.7h7.6M1501.0 709.7h1.9M1508.5 709.7h7.6M1519.9 709.7h0M1523.6 709.7h9.4M1538.8 709.7h5.7M1548.2 709.7h0M1487.8 707.8h1.9M1495.3 707.8h34.0M1540.6 707.8h3.8M1548.2 707.8h0M1491.6 705.9h0M1499.1 705.9h0M1502.9 705.9h5.7M1512.3 705.9h20.8M1536.9 705.9h0M1546.3 705.9h0M1580.3 705.9h0M1485.9 704.0h0M1491.6 704.0h0M1497.2 704.0h0M1502.9 704.0h13.2M1519.9 704.0h7.6M1531.2 704.0h3.8M1540.6 704.0h3.8M1552.0 704.0h0M1559.5 704.0h0M1497.2 702.1h1.9M1504.8 702.1h0M1508.5 702.1h7.6M1519.9 702.1h1.9M1527.4 702.1h5.7M1536.9 702.1h7.6M1565.2 702.1h0M1487.8 700.2h1.9M1501.0 700.2h18.9M1525.5 700.2h9.4M1538.8 700.2h3.8M1565.2 700.2h1.9M1599.2 700.2h0M1616.2 700.2h0M1491.6 698.3h3.8M1501.0 698.3h1.9M1508.5 698.3h1.9M1514.2 698.3h3.8M1523.6 698.3h7.6M1536.9 698.3h1.9M1546.3 698.3h0M1567.1 698.3h0M1489.7 696.4h0M1495.3 696.4h7.6M1512.3 696.4h5.7M1523.6 696.4h3.8M1535.0 696.4h3.8M1542.5 696.4h0M1546.3 696.4h0M1555.7 696.4h1.9M1570.8 696.4h0M1580.3 696.4h0M1487.8 694.6h1.9M1493.4 694.6h0M1504.8 694.6h7.6M1516.1 694.6h15.1M1535.0 694.6h0M1540.6 694.6h1.9M1487.8 692.7h0M1495.3 692.7h1.9M1502.9 692.7h13.2M1519.9 692.7h11.3M1535.0 692.7h1.9M1540.6 692.7h3.8M1586.0 692.7h0M1618.0 692.7h0M1491.6 690.8h0M1495.3 690.8h5.7M1506.7 690.8h3.8M1514.2 690.8h0M1518.0 690.8h5.7M1527.4 690.8h3.8M1535.0 690.8h1.9M1542.5 690.8h7.6M1576.5 690.8h0M1487.8 688.9h0M1497.2 688.9h0M1501.0 688.9h1.9M1506.7 688.9h0M1514.2 688.9h18.9M1542.5 688.9h1.9M1491.6 687.0h1.9M1497.2 687.0h0M1504.8 687.0h0M1508.5 687.0h11.3M1523.6 687.0h0M1527.4 687.0h3.8M1535.0 687.0h5.7M1544.4 687.0h0M1555.7 687.0h0M1589.7 687.0h0M1499.1 685.1h1.9M1508.5 685.1h1.9M1516.1 685.1h5.7M1525.5 685.1h0M1531.2 685.1h0M1535.0 685.1h1.9M1540.6 685.1h7.6M1553.9 685.1h0M1572.7 685.1h0M1489.7 683.2h0M1495.3 683.2h1.9M1501.0 683.2h0M1504.8 683.2h1.9M1510.4 683.2h1.9M1521.8 683.2h1.9M1529.3 683.2h9.4M1552.0 683.2h0M1555.7 683.2h0M1499.1 681.3h0M1502.9 681.3h0M1512.3 681.3h5.7M1521.8 681.3h20.8M1546.3 681.3h0M1550.1 681.3h1.9M1576.5 681.3h0M1582.2 681.3h0M1491.6 679.4h9.4M1504.8 679.4h3.8M1514.2 679.4h0M1519.9 679.4h0M1523.6 679.4h5.7M1533.1 679.4h0M1538.8 679.4h1.9M1570.8 679.4h0M1497.2 677.6h0M1504.8 677.6h1.9M1510.4 677.6h3.8M1518.0 677.6h9.4M1538.8 677.6h5.7M1548.2 677.6h0M1555.7 677.6h0M1559.5 677.6h0M1491.6 675.7h0M1502.9 675.7h0M1518.0 675.7h1.9M1525.5 675.7h0M1529.3 675.7h0M1533.1 675.7h1.9M1540.6 675.7h7.6M1552.0 675.7h0M1561.4 675.7h0M1582.2 675.7h0M1499.1 673.8h0M1502.9 673.8h0M1506.7 673.8h1.9M1512.3 673.8h1.9M1518.0 673.8h0M1521.8 673.8h1.9M1527.4 673.8h0M1531.2 673.8h0M1540.6 673.8h0M1550.1 673.8h1.9M1561.4 673.8h0M1576.5 673.8h0M1587.8 673.8h0M1644.5 673.8h0M1497.2 671.9h0M1501.0 671.9h3.8M1508.5 671.9h1.9M1514.2 671.9h3.8M1529.3 671.9h3.8M1540.6 671.9h7.6M1618.0 671.9h0M1501.0 670.0h3.8M1508.5 670.0h1.9M1514.2 670.0h3.8M1523.6 670.0h0M1527.4 670.0h1.9M1533.1 670.0h0M1540.6 670.0h0M1544.4 670.0h0M1548.2 670.0h0M1552.0 670.0h0M1565.2 670.0h0M1582.2 670.0h0M1499.1 668.1h0M1502.9 668.1h0M1512.3 668.1h5.7M1523.6 668.1h1.9M1529.3 668.1h1.9M1540.6 668.1h3.8M1491.6 666.2h5.7M1504.8 666.2h0M1512.3 666.2h0M1516.1 666.2h3.8M1523.6 666.2h7.6M1540.6 666.2h0M1546.3 666.2h0M1550.1 666.2h0M1567.1 666.2h0M1491.6 664.3h0M1501.0 664.3h0M1512.3 664.3h0M1521.8 664.3h0M1527.4 664.3h0M1533.1 664.3h0M1538.8 664.3h0M1542.5 664.3h1.9M1550.1 664.3h1.9M1574.6 664.3h0M1497.2 662.5h0M1501.0 662.5h3.8M1510.4 662.5h0M1518.0 662.5h0M1521.8 662.5h0M1527.4 662.5h5.7M1536.9 662.5h0M1540.6 662.5h0M1544.4 662.5h0M1580.3 662.5h0M1489.7 660.6h1.9M1506.7 660.6h0M1510.4 660.6h3.8M1518.0 660.6h3.8M1529.3 660.6h0M1533.1 660.6h0M1536.9 660.6h0M1550.1 660.6h0M1586.0 660.6h0M1499.1 658.7h3.8M1506.7 658.7h1.9M1514.2 658.7h0M1518.0 658.7h9.4M1531.2 658.7h7.6M1544.4 658.7h0M1548.2 658.7h0M1553.9 658.7h0M1561.4 658.7h0M1504.8 656.8h1.9M1519.9 656.8h0M1523.6 656.8h0M1527.4 656.8h0M1533.1 656.8h0M1536.9 656.8h0M1546.3 656.8h0M1550.1 656.8h0M1555.7 656.8h1.9M1491.6 654.9h0M1506.7 654.9h0M1514.2 654.9h1.9M1519.9 654.9h3.8M1527.4 654.9h0M1544.4 654.9h0M1561.4 654.9h0M1487.8 653.0h0M1497.2 653.0h0M1504.8 653.0h1.9M1510.4 653.0h7.6M1521.8 653.0h0M1525.5 653.0h7.6M1542.5 653.0h0M1550.1 653.0h0M1567.1 653.0h0M1497.2 651.1h0M1506.7 651.1h0M1514.2 651.1h1.9M1535.0 651.1h3.8M1544.4 651.1h1.9M1552.0 651.1h0M1555.7 651.1h0M1561.4 651.1h0M1591.6 651.1h0M1616.2 651.1h0M1487.8 649.2h0M1497.2 649.2h0M1502.9 649.2h0M1506.7 649.2h0M1512.3 649.2h0M1518.0 649.2h0M1523.6 649.2h5.7M1533.1 649.2h0M1536.9 649.2h1.9M1550.1 649.2h0M1497.2 647.4h0M1506.7 647.4h3.8M1521.8 647.4h0M1525.5 647.4h1.9M1531.2 647.4h0M1536.9 647.4h1.9M1542.5 647.4h0M1548.2 647.4h0M1553.9 647.4h0M1572.7 647.4h0M1491.6 645.5h0M1499.1 645.5h0M1508.5 645.5h5.7M1519.9 645.5h0M1523.6 645.5h0M1531.2 645.5h1.9M1540.6 645.5h0M1544.4 645.5h1.9M1550.1 645.5h0M1553.9 645.5h0M1561.4 645.5h0M1569.0 645.5h0M1491.6 643.6h0M1495.3 643.6h0M1499.1 643.6h0M1504.8 643.6h0M1508.5 643.6h0M1514.2 643.6h0M1518.0 643.6h0M1523.6 643.6h0M1529.3 643.6h1.9M1544.4 643.6h1.9M1552.0 643.6h1.9M1570.8 643.6h0M1678.5 643.6h0M1491.6 641.7h0M1495.3 641.7h0M1499.1 641.7h0M1508.5 641.7h0M1518.0 641.7h1.9M1523.6 641.7h5.7M1536.9 641.7h0M1542.5 641.7h5.7M1561.4 641.7h0M1572.7 641.7h0M1599.2 641.7h0M1501.0 639.8h0M1504.8 639.8h1.9M1518.0 639.8h1.9M1523.6 639.8h0M1527.4 639.8h0M1531.2 639.8h1.9M1540.6 639.8h0M1544.4 639.8h0M1550.1 639.8h0M1578.4 639.8h0M1644.5 639.8h0M1497.2 637.9h0M1504.8 637.9h1.9M1510.4 637.9h1.9M1519.9 637.9h0M1525.5 637.9h5.7M1535.0 637.9h0M1538.8 637.9h1.9M1546.3 637.9h0M1559.5 637.9h0M1565.2 637.9h0M1578.4 637.9h0M1497.2 636.0h5.7M1510.4 636.0h1.9M1518.0 636.0h0M1521.8 636.0h0M1525.5 636.0h1.9M1531.2 636.0h0M1535.0 636.0h1.9M1582.2 636.0h0M1493.4 634.1h1.9M1506.7 634.1h0M1519.9 634.1h1.9M1525.5 634.1h7.6M1550.1 634.1h0M1555.7 634.1h1.9M1625.6 634.1h0M1502.9 632.2h0M1516.1 632.2h0M1519.9 632.2h1.9M1529.3 632.2h1.9M1535.0 632.2h1.9M1540.6 632.2h0M1544.4 632.2h0M1552.0 632.2h0M1578.4 632.2h0M1618.0 632.2h0M1506.7 630.4h1.9M1516.1 630.4h0M1521.8 630.4h0M1525.5 630.4h1.9M1531.2 630.4h0M1540.6 630.4h0M1544.4 630.4h0M1561.4 630.4h0M1565.2 630.4h0M1493.4 628.5h0M1514.2 628.5h0M1518.0 628.5h1.9M1523.6 628.5h5.7M1542.5 628.5h0M1546.3 628.5h0M1550.1 628.5h1.9M1569.0 628.5h0M1614.3 628.5h0M1502.9 626.6h3.8M1519.9 626.6h0M1527.4 626.6h0M1535.0 626.6h0M1540.6 626.6h0M1546.3 626.6h1.9M1555.7 626.6h0M1561.4 626.6h0M1565.2 626.6h0M1506.7 624.7h0M1523.6 624.7h3.8M1536.9 624.7h0M1540.6 624.7h1.9M1548.2 624.7h0M1552.0 624.7h0M1557.6 624.7h3.8M1574.6 624.7h0M1629.4 624.7h0M1499.1 622.8h0M1512.3 622.8h1.9M1518.0 622.8h7.6M1529.3 622.8h0M1536.9 622.8h1.9M1546.3 622.8h0M1552.0 622.8h0M1557.6 622.8h0M1489.7 620.9h0M1497.2 620.9h0M1501.0 620.9h0M1504.8 620.9h3.8M1516.1 620.9h1.9M1523.6 620.9h0M1527.4 620.9h0M1533.1 620.9h1.9M1540.6 620.9h0M1548.2 620.9h1.9M1555.7 620.9h0M1502.9 619.0h0M1527.4 619.0h0M1533.1 619.0h1.9M1552.0 619.0h0M1557.6 619.0h0M1569.0 619.0h0M1508.5 617.1h1.9M1516.1 617.1h3.8M1538.8 617.1h0M1548.2 617.1h0M1552.0 617.1h3.8M1561.4 617.1h0M1572.7 617.1h0M1599.2 617.1h0M1621.8 617.1h0M1516.1 615.3h1.9M1529.3 615.3h3.8M1536.9 615.3h0M1542.5 615.3h1.9M1548.2 615.3h0M1582.2 615.3h0M1597.3 615.3h0M1502.9 613.4h0M1508.5 613.4h0M1512.3 613.4h0M1518.0 613.4h0M1521.8 613.4h0M1527.4 613.4h1.9M1535.0 613.4h9.4M1548.2 613.4h0M1553.9 613.4h3.8M1608.6 613.4h0M1638.8 613.4h0M1493.4 611.5h0M1497.2 611.5h1.9M1519.9 611.5h0M1525.5 611.5h1.9M1550.1 611.5h1.9M1487.8 609.6h0M1508.5 609.6h1.9M1514.2 609.6h0M1519.9 609.6h0M1525.5 609.6h0M1533.1 609.6h1.9M1559.5 609.6h0M1485.9 607.7h0M1502.9 607.7h0M1518.0 607.7h0M1525.5 607.7h0M1531.2 607.7h0M1542.5 607.7h1.9M1519.9 605.8h0M1523.6 605.8h0M1538.8 605.8h0M1552.0 605.8h0M1555.7 605.8h0M1565.2 605.8h0M1572.7 605.8h0M1497.2 603.9h0M1501.0 603.9h3.8M1519.9 603.9h1.9M1525.5 603.9h0M1542.5 603.9h0M1548.2 603.9h0M1561.4 603.9h0M1565.2 603.9h0M1497.2 602.0h0M1510.4 602.0h1.9M1521.8 602.0h0M1527.4 602.0h1.9M1536.9 602.0h1.9M1546.3 602.0h0M1552.0 602.0h0M1557.6 602.0h0M1587.8 602.0h0M1506.7 600.2h0M1519.9 600.2h0M1527.4 600.2h1.9M1536.9 600.2h0M1569.0 600.2h0M1512.3 598.3h0M1516.1 598.3h0M1525.5 598.3h0M1529.3 598.3h0M1542.5 598.3h1.9M1552.0 598.3h0M1565.2 598.3h0M1569.0 598.3h0M1495.3 596.4h0M1499.1 596.4h0M1502.9 596.4h0M1514.2 596.4h0M1518.0 596.4h0M1523.6 596.4h0M1533.1 596.4h0M1538.8 596.4h0M1553.9 596.4h0M1516.1 594.5h0M1525.5 594.5h0M1535.0 594.5h9.4M1548.2 594.5h0M1552.0 594.5h0M1570.8 594.5h0M1502.9 592.6h0M1533.1 592.6h0M1559.5 592.6h0M1635.0 592.6h0M1510.4 590.7h0M1516.1 590.7h3.8M1531.2 590.7h1.9M1536.9 590.7h0M1555.7 590.7h0M1510.4 588.8h0M1519.9 588.8h1.9M1529.3 588.8h3.8M1548.2 588.8h0M1552.0 588.8h0M1563.3 588.8h0M1629.4 588.8h0M1535.0 586.9h0M1544.4 586.9h0M1555.7 586.9h0M1519.9 585.0h3.8M1527.4 585.0h0M1533.1 585.0h0M1536.9 585.0h0M1542.5 585.0h0M1548.2 585.0h1.9M1553.9 585.0h0M1504.8 583.2h0M1512.3 583.2h0M1521.8 583.2h0M1525.5 583.2h0M1531.2 583.2h0M1535.0 583.2h0M1540.6 583.2h0M1627.5 583.2h0M1519.9 581.3h0M1538.8 581.3h1.9M1548.2 581.3h0M1559.5 581.3h0M1563.3 581.3h0M1599.2 581.3h0M1499.1 579.4h0M1504.8 579.4h0M1512.3 579.4h0M1525.5 579.4h0M1529.3 579.4h0M1557.6 579.4h0M1618.0 579.4h0M1514.2 577.5h0M1519.9 577.5h3.8M1536.9 577.5h0M1544.4 577.5h0M1548.2 577.5h0M1552.0 577.5h0M1504.8 575.6h0M1525.5 575.6h0M1531.2 575.6h0M1535.0 575.6h0M1540.6 575.6h0M1552.0 575.6h0M1555.7 575.6h0M1499.1 573.7h0M1519.9 573.7h0M1535.0 573.7h0M1548.2 573.7h0M1595.4 573.7h0M1519.9 571.8h0M1523.6 571.8h0M1531.2 571.8h0M1535.0 571.8h0M1538.8 571.8h1.9M1544.4 571.8h0M1561.4 571.8h0M1491.6 569.9h0M1518.0 569.9h0M1533.1 569.9h0M1550.1 569.9h0M1527.4 568.1h0M1536.9 568.1h0M1553.9 568.1h1.9M1563.3 568.1h0M1502.9 566.2h0M1521.8 566.2h1.9M1544.4 566.2h1.9M1550.1 566.2h0M1608.6 566.2h0M1525.5 564.3h3.8M1535.0 564.3h0M1552.0 564.3h0M1601.1 564.3h0M1518.0 562.4h0M1525.5 562.4h0M1531.2 562.4h1.9M1536.9 562.4h0M1548.2 562.4h0M1557.6 562.4h0M1510.4 560.5h0M1540.6 560.5h0M1544.4 560.5h0M1548.2 560.5h1.9M1553.9 560.5h1.9M1567.1 560.5h0M1504.8 558.6h0M1518.0 558.6h0M1536.9 558.6h1.9M1542.5 558.6h0M1553.9 558.6h0M1559.5 558.6h0M1514.2 556.7h1.9M1529.3 556.7h0M1535.0 556.7h0M1538.8 556.7h0M1555.7 556.7h0M1644.5 556.7h0M1518.0 554.8h0M1535.0 554.8h0M1538.8 554.8h0M1542.5 554.8h0M1582.2 554.8h0M1504.8 553.0h0M1514.2 553.0h0M1518.0 553.0h0M1527.4 553.0h0M1536.9 553.0h3.8M1546.3 553.0h0M1604.8 553.0h0M1523.6 551.1h0M1531.2 551.1h5.7M1540.6 551.1h0M1546.3 551.1h0M1557.6 551.1h0M1527.4 549.2h0M1535.0 549.2h0M1540.6 549.2h0M1544.4 549.2h0M1555.7 549.2h0M1559.5 549.2h0M1497.2 547.3h0M1508.5 547.3h0M1529.3 547.3h0M1538.8 547.3h0M1544.4 547.3h1.9M1525.5 545.4h1.9M1531.2 545.4h0M1536.9 545.4h0M1557.6 545.4h0M1521.8 543.5h1.9M1531.2 543.5h0M1538.8 543.5h0M1546.3 543.5h0M1553.9 543.5h0M1621.8 543.5h0M1533.1 541.6h0M1538.8 541.6h0M1542.5 541.6h0M1550.1 541.6h0M1565.2 541.6h0M1578.4 541.6h0M1501.0 539.7h0M1506.7 539.7h0M1544.4 539.7h0M1550.1 539.7h0M1587.8 539.7h0M1612.4 539.7h0M1638.8 539.7h0M1506.7 537.8h0M1518.0 537.8h0M1521.8 537.8h0M1529.3 537.8h3.8M1542.5 537.8h0M1550.1 537.8h0M1533.1 536.0h1.9M1538.8 536.0h0M1557.6 536.0h0M1567.1 536.0h0M1542.5 534.1h0M1553.9 534.1h0M1578.4 534.1h0M1582.2 534.1h0M1506.7 532.2h0M1535.0 532.2h1.9M1548.2 532.2h0M1670.9 532.2h0M1514.2 530.3h0M1529.3 530.3h0M1563.3 530.3h0M1567.1 530.3h0M1604.8 530.3h0M1504.8 528.4h0M1570.8 528.4h0M1518.0 526.5h0M1523.6 526.5h0M1527.4 526.5h0M1533.1 526.5h5.7M1550.1 526.5h0M1587.8 526.5h0M1533.1 524.6h0M1540.6 524.6h0M1546.3 524.6h3.8M1561.4 524.6h0M1523.6 522.7h1.9M1529.3 522.7h0M1540.6 522.7h0M1546.3 522.7h0M1557.6 522.7h0M1519.9 520.9h0M1523.6 520.9h0M1540.6 520.9h0M1546.3 520.9h0M1550.1 520.9h1.9M1489.7 519.0h0M1514.2 519.0h0M1525.5 519.0h0M1548.2 519.0h0M1655.8 519.0h0M1504.8 517.1h0M1510.4 517.1h0M1519.9 517.1h0M1529.3 517.1h0M1542.5 517.1h0M1546.3 517.1h3.8M1559.5 517.1h0M1516.1 515.2h0M1523.6 515.2h0M1538.8 515.2h0M1552.0 515.2h0M1552.0 513.3h0M1582.2 513.3h0M1686.0 513.3h0M1533.1 511.4h0M1540.6 511.4h1.9M1538.8 509.5h0M1536.9 507.6h0M1540.6 507.6h0M1553.9 507.6h0M1569.0 507.6h0M1514.2 505.8h0M1531.2 505.8h0M1535.0 505.8h0M1546.3 505.8h0M1552.0 505.8h0M1555.7 505.8h0M1563.3 505.8h1.9M1529.3 503.9h0M1535.0 503.9h0M1544.4 503.9h0M1567.1 503.9h0M1576.5 503.9h0M1597.3 503.9h0M1535.0 502.0h3.8M1553.9 502.0h0M1561.4 502.0h0M1587.8 502.0h0M1625.6 502.0h0M1516.1 500.1h0M1529.3 500.1h0M1533.1 500.1h0M1536.9 500.1h0M1548.2 500.1h0M1555.7 500.1h0M1518.0 498.2h0M1548.2 498.2h5.7M1540.6 496.3h0M1561.4 496.3h0M1536.9 494.4h0M1540.6 494.4h0M1587.8 494.4h0M1516.1 492.5h0M1536.9 492.5h1.9M1542.5 492.5h1.9M1563.3 492.5h0M1612.4 492.5h0M1525.5 490.6h0M1540.6 490.6h0M1546.3 490.6h0M1550.1 490.6h0M1510.4 488.8h0M1544.4 488.8h0M1555.7 488.8h0M1570.8 488.8h0M1599.2 488.8h0M1544.4 486.9h0M1548.2 486.9h0M1587.8 486.9h0M1514.2 485.0h0M1538.8 485.0h0M1546.3 485.0h0M1542.5 483.1h0M1555.7 483.1h0M1565.2 483.1h0M1561.4 481.2h0M1525.5 479.3h0M1538.8 479.3h0M1638.8 479.3h0M1540.6 477.4h1.9M1550.1 477.4h0M1580.3 477.4h0M1527.4 475.5h0M1542.5 475.5h0M1546.3 475.5h0M1550.1 475.5h0M1512.3 471.8h0M1546.3 471.8h0M1527.4 469.9h0M1538.8 469.9h0M1544.4 469.9h0M1552.0 469.9h0M1519.9 468.0h0M1542.5 468.0h0M1550.1 468.0h0M1565.2 466.1h0M1570.8 466.1h0M1550.1 464.2h0M1569.0 464.2h0M1608.6 464.2h0M1525.5 462.3h0M1550.1 462.3h0M1531.2 460.4h0M1559.5 460.4h0M1553.9 458.6h0M1565.2 458.6h0M1580.3 458.6h0M1533.1 456.7h0M1546.3 456.7h0M1557.6 456.7h0M1570.8 456.7h0M1525.5 454.8h0M1561.4 454.8h0M1567.1 454.8h0M1531.2 452.9h0M1536.9 452.9h0M1548.2 451.0h0M1555.7 451.0h0M1561.4 451.0h0M1589.7 451.0h0M1508.5 449.1h0M1599.2 449.1h0M1523.6 447.2h0M1552.0 445.3h0M1542.5 441.6h0M1546.3 441.6h0M1570.8 441.6h0M1631.3 441.6h0M1563.3 439.7h0M1567.1 439.7h3.8M1546.3 437.8h0M1527.4 435.9h0M1542.5 435.9h1.9M1548.2 435.9h0M1535.0 434.0h0M1572.7 434.0h0M1512.3 432.1h0M1521.8 432.1h1.9M1550.1 432.1h0M1555.7 430.2h0M1569.0 430.2h0M1580.3 430.2h0M1553.9 428.3h0M1567.1 428.3h0M1546.3 426.5h0M1553.9 426.5h0M1572.7 426.5h0M1604.8 426.5h0M1527.4 424.6h0M1555.7 424.6h0M1533.1 422.7h0M1550.1 422.7h0M1578.4 422.7h0M1602.9 420.8h0M1536.9 418.9h0M1670.9 418.9h0M1519.9 417.0h0M1527.4 417.0h0M1557.6 417.0h0M1567.1 417.0h0M1599.2 417.0h0M1550.1 413.2h1.9M1561.4 413.2h0M1529.3 411.4h0M1555.7 411.4h0M1529.3 409.5h0M1582.2 409.5h0M1544.4 407.6h0M1552.0 407.6h0M1599.2 407.6h1.9M1569.0 405.7h0M1587.8 405.7h0M1625.6 405.7h0M1569.0 403.8h0M1521.8 400.0h0M1548.2 398.1h1.9M1563.3 398.1h0M1578.4 396.2h0M1559.5 394.4h0M1548.2 392.5h0M1559.5 390.6h0M1580.3 388.7h0M1576.5 386.8h0M1548.2 383.0h0M1553.9 383.0h0M1506.7 381.1h0M1529.3 381.1h0M1552.0 381.1h0M1557.6 381.1h0M1576.5 381.1h0M1542.5 379.3h0M1574.6 377.4h0M1567.1 375.5h0M1582.2 375.5h0M1533.1 371.7h0M1552.0 371.7h1.9M1544.4 369.8h0M1555.7 369.8h0M1576.5 367.9h0M1557.6 366.0h0M1540.6 364.2h0M1591.6 362.3h0M1538.8 358.5h0M1544.4 354.7h0M1606.7 352.8h0M1636.9 352.8h0M1544.4 349.0h0M1548.2 349.0h0M1536.9 347.2h0M1633.2 347.2h0M1557.6 343.4h0M1570.8 343.4h0M1552.0 341.5h0M1574.6 341.5h0M1565.2 339.6h0M1576.5 339.6h0M1529.3 337.7h0M1610.5 337.7h0M1589.7 335.8h0M1544.4 333.9h0M1536.9 332.1h0M1570.8 332.1h0M1601.1 332.1h0M1548.2 330.2h0M1569.0 330.2h0M1640.7 320.7h0M1542.5 318.8h0M1561.4 318.8h0M1608.6 317.0h0M1572.7 313.2h0M1531.2 311.3h0M1561.4 311.3h0M1565.2 309.4h0M1561.4 305.6h0M1548.2 303.7h0M1557.6 303.7h0M1570.8 303.7h0M1497.2 301.8h0M1557.6 301.8h0M1572.7 296.2h0M1553.9 294.3h0M1570.8 292.4h0M1569.0 288.6h0M1563.3 286.7h0M1569.0 284.9h1.9M1680.4 284.9h0M1555.7 279.2h0M1578.4 277.3h1.9M1559.5 271.6h0M1552.0 267.9h0M1531.2 264.1h0M1546.3 264.1h0M1546.3 262.2h0M1563.3 260.3h0M1621.8 258.4h0M1593.5 256.5h0M1561.4 254.6h0M1546.3 250.9h0M1565.2 247.1h0M1601.1 247.1h0M1529.3 243.3h0M1570.8 241.4h0M1570.8 239.5h0M1587.8 237.7h0M1499.1 235.8h0M1508.5 228.2h0M1570.8 226.3h0M1567.1 222.6h0M1569.0 218.8h0M1533.1 215.0h0M1565.2 211.2h0M1580.3 205.6h0M1593.5 203.7h0M1695.5 199.9h0M1561.4 194.2h0M1638.8 190.5h0M1591.6 182.9h0M1606.7 181.0h0M1582.2 179.1h0M1565.2 177.2h0M1587.8 171.6h0" stroke="#c81e0a" stroke-width="3.0" stroke-linecap="square" fill="none"/>
<path d="M1531.2 921.1h0M1535.0 921.1h69.9M1618.0 921.1h0M1529.3 919.2h45.3M1578.4 919.2h20.8M1602.9 919.2h5.7M1612.4 919.2h1.9M1618.0 919.2h5.7M1629.4 919.2h1.9M1644.5 919.2h0M1648.3 919.2h0M1527.4 917.3h71.7M1602.9 917.3h5.7M1612.4 917.3h0M1616.2 917.3h5.7M1646.4 917.3h0M1653.9 917.3h0M1523.6 915.4h0M1527.4 915.4h90.6M1621.8 915.4h3.8M1631.3 915.4h0M1636.9 915.4h0M1640.7 915.4h1.9M1646.4 915.4h3.8M1521.8 913.6h81.2M1606.7 913.6h13.2M1625.6 913.6h0M1629.4 913.6h0M1633.2 913.6h5.7M1652.0 913.6h1.9M1657.7 913.6h1.9M1519.9 911.7h0M1523.6 911.7h37.8M1565.2 911.7h37.8M1606.7 911.7h13.2M1623.7 911.7h0M1631.3 911.7h1.9M1636.9 911.7h0M1640.7 911.7h0M1650.1 911.7h1.9M1657.7 911.7h0M1674.7 911.7h0M1519.9 909.8h77.4M1601.1 909.8h17.0M1623.7 909.8h0M1627.5 909.8h1.9M1636.9 909.8h0M1640.7 909.8h0M1648.3 909.8h0M1652.0 909.8h0M1655.8 909.8h0M1674.7 909.8h1.9M1682.2 909.8h0M1521.8 907.9h54.8M1580.3 907.9h39.6M1627.5 907.9h0M1633.2 907.9h0M1636.9 907.9h1.9M1644.5 907.9h5.7M1655.8 907.9h0M1659.6 907.9h0M1682.2 907.9h0M1516.1 906.0h0M1519.9 906.0h66.1M1589.7 906.0h22.7M1616.2 906.0h9.4M1629.4 906.0h0M1633.2 906.0h1.9M1638.8 906.0h0M1646.4 906.0h3.8M1655.8 906.0h3.8M1665.2 906.0h3.8M1672.8 906.0h3.8M1682.2 906.0h0M1699.2 906.0h0M1514.2 904.1h0M1518.0 904.1h100.1M1621.8 904.1h0M1627.5 904.1h0M1635.0 904.1h0M1638.8 904.1h0M1642.6 904.1h0M1646.4 904.1h1.9M1652.0 904.1h0M1657.7 904.1h0M1665.2 904.1h1.9M1680.4 904.1h0M1687.9 904.1h0M1697.3 904.1h0M1512.3 902.2h1.9M1518.0 902.2h94.4M1616.2 902.2h0M1619.9 902.2h1.9M1627.5 902.2h1.9M1640.7 902.2h0M1646.4 902.2h0M1653.9 902.2h1.9M1659.6 902.2h0M1663.4 902.2h1.9M1682.2 902.2h0M1693.6 902.2h0M1699.2 902.2h0M1512.3 900.3h0M1518.0 900.3h94.4M1618.0 900.3h5.7M1627.5 900.3h5.7M1636.9 900.3h0M1640.7 900.3h0M1644.5 900.3h3.8M1652.0 900.3h0M1655.8 900.3h0M1665.2 900.3h1.9M1680.4 900.3h0M1687.9 900.3h0M1693.6 900.3h5.7M1518.0 898.5h68.0M1589.7 898.5h7.6M1601.1 898.5h22.7M1627.5 898.5h3.8M1635.0 898.5h0M1648.3 898.5h0M1663.4 898.5h0M1678.5 898.5h1.9M1689.8 898.5h0M1693.6 898.5h0M1516.1 896.6h1.9M1521.8 896.6h1.9M1527.4 896.6h66.1M1597.3 896.6h26.4M1631.3 896.6h0M1635.0 896.6h1.9M1640.7 896.6h0M1644.5 896.6h0M1650.1 896.6h0M1661.5 896.6h1.9M1670.9 896.6h0M1680.4 896.6h1.9M1687.9 896.6h0M1691.7 896.6h0M1701.1 896.6h0M1518.0 894.7h1.9M1525.5 894.7h96.3M1627.5 894.7h3.8M1642.6 894.7h1.9M1648.3 894.7h0M1652.0 894.7h1.9M1657.7 894.7h0M1665.2 894.7h3.8M1674.7 894.7h0M1678.5 894.7h0M1682.2 894.7h0M1689.8 894.7h3.8M1697.3 894.7h0M1514.2 892.8h0M1518.0 892.8h0M1521.8 892.8h5.7M1531.2 892.8h7.6M1542.5 892.8h0M1546.3 892.8h68.0M1618.0 892.8h3.8M1627.5 892.8h1.9M1633.2 892.8h0M1638.8 892.8h3.8M1646.4 892.8h1.9M1663.4 892.8h1.9M1669.0 892.8h0M1672.8 892.8h0M1682.2 892.8h3.8M1689.8 892.8h1.9M1695.5 892.8h0M1699.2 892.8h0M1523.6 890.9h0M1527.4 890.9h1.9M1533.1 890.9h1.9M1538.8 890.9h13.2M1555.7 890.9h1.9M1561.4 890.9h0M1565.2 890.9h52.9M1621.8 890.9h0M1625.6 890.9h0M1631.3 890.9h3.8M1638.8 890.9h7.6M1655.8 890.9h0M1661.5 890.9h0M1665.2 890.9h0M1670.9 890.9h1.9M1676.6 890.9h0M1682.2 890.9h1.9M1687.9 890.9h0M1693.6 890.9h7.6M1521.8 889.0h0M1527.4 889.0h0M1531.2 889.0h0M1535.0 889.0h0M1546.3 889.0h0M1550.1 889.0h9.4M1563.3 889.0h13.2M1580.3 889.0h17.0M1601.1 889.0h34.0M1640.7 889.0h1.9M1646.4 889.0h0M1650.1 889.0h1.9M1655.8 889.0h0M1659.6 889.0h0M1665.2 889.0h1.9M1670.9 889.0h5.7M1695.5 889.0h0M1701.1 889.0h0M1538.8 887.1h3.8M1546.3 887.1h0M1550.1 887.1h1.9M1557.6 887.1h18.9M1580.3 887.1h13.2M1597.3 887.1h7.6M1608.6 887.1h15.1M1627.5 887.1h5.7M1636.9 887.1h9.4M1650.1 887.1h0M1653.9 887.1h1.9M1667.1 887.1h0M1676.6 887.1h0M1687.9 887.1h0M1693.6 887.1h0M1701.1 887.1h0M1542.5 885.2h0M1546.3 885.2h0M1550.1 885.2h0M1557.6 885.2h3.8M1569.0 885.2h9.4M1584.1 885.2h0M1587.8 885.2h0M1593.5 885.2h9.4M1606.7 885.2h1.9M1612.4 885.2h5.7M1621.8 885.2h5.7M1633.2 885.2h3.8M1644.5 885.2h3.8M1652.0 885.2h1.9M1663.4 885.2h0M1684.1 885.2h0M1542.5 883.4h1.9M1550.1 883.4h0M1559.5 883.4h3.8M1574.6 883.4h0M1582.2 883.4h0M1586.0 883.4h1.9M1591.6 883.4h0M1602.9 883.4h1.9M1608.6 883.4h9.4M1625.6 883.4h0M1629.4 883.4h1.9M1638.8 883.4h0M1648.3 883.4h0M1655.8 883.4h0M1659.6 883.4h0M1667.1 883.4h0M1674.7 883.4h0M1680.4 883.4h5.7M1689.8 883.4h0M1693.6 883.4h0M1697.3 883.4h1.9M1535.0 881.5h0M1563.3 881.5h0M1572.7 881.5h0M1578.4 881.5h1.9M1587.8 881.5h0M1593.5 881.5h5.7M1608.6 881.5h3.8M1616.2 881.5h1.9M1627.5 881.5h0M1633.2 881.5h0M1636.9 881.5h3.8M1644.5 881.5h9.4M1657.7 881.5h1.9M1663.4 881.5h0M1672.8 881.5h3.8M1684.1 881.5h0M1687.9 881.5h0M1691.7 881.5h0M1536.9 879.6h1.9M1563.3 879.6h0M1576.5 879.6h0M1582.2 879.6h0M1587.8 879.6h0M1591.6 879.6h1.9M1602.9 879.6h1.9M1608.6 879.6h0M1612.4 879.6h0M1621.8 879.6h0M1629.4 879.6h0M1633.2 879.6h1.9M1644.5 879.6h3.8M1655.8 879.6h0M1659.6 879.6h3.8M1667.1 879.6h0M1680.4 879.6h0M1684.1 879.6h1.9M1533.1 877.7h0M1567.1 877.7h0M1572.7 877.7h0M1576.5 877.7h0M1610.5 877.7h5.7M1619.9 877.7h3.8M1638.8 877.7h1.9M1644.5 877.7h0M1648.3 877.7h0M1659.6 877.7h0M1667.1 877.7h1.9M1674.7 877.7h0M1686.0 877.7h0M1691.7 877.7h1.9M1699.2 877.7h0M1567.1 875.8h0M1582.2 875.8h0M1597.3 875.8h1.9M1602.9 875.8h1.9M1616.2 875.8h0M1619.9 875.8h1.9M1625.6 875.8h0M1646.4 875.8h1.9M1657.7 875.8h3.8M1667.1 875.8h0M1670.9 875.8h1.9M1680.4 875.8h0M1693.6 875.8h0M1701.1 875.8h0M1538.8 873.9h0M1546.3 873.9h0M1555.7 873.9h0M1578.4 873.9h0M1586.0 873.9h0M1595.4 873.9h0M1602.9 873.9h0M1610.5 873.9h0M1629.4 873.9h0M1635.0 873.9h0M1669.0 873.9h0M1672.8 873.9h0M1680.4 873.9h1.9M1693.6 873.9h0M1697.3 873.9h0M1582.2 872.0h1.9M1612.4 872.0h0M1642.6 872.0h0M1648.3 872.0h0M1652.0 872.0h1.9M1667.1 872.0h1.9M1680.4 872.0h1.9M1691.7 872.0h0M1544.4 870.1h0M1580.3 870.1h1.9M1593.5 870.1h0M1606.7 870.1h0M1629.4 870.1h0M1636.9 870.1h0M1640.7 870.1h0M1644.5 870.1h0M1657.7 870.1h0M1667.1 870.1h0M1672.8 870.1h0M1676.6 870.1h1.9M1684.1 870.1h0M1586.0 868.2h0M1619.9 868.2h0M1631.3 868.2h0M1655.8 868.2h0M1586.0 866.4h0M1593.5 866.4h0M1635.0 866.4h0M1674.7 866.4h0M1678.5 866.4h0M1687.9 866.4h0M1550.1 864.5h0M1561.4 864.5h0M1621.8 864.5h0M1636.9 864.5h0M1648.3 864.5h0M1661.5 864.5h1.9M1678.5 864.5h0M1684.1 864.5h0M1614.3 862.6h0M1627.5 862.6h0M1665.2 862.6h0M1691.7 862.6h0M1697.3 862.6h0M1635.0 860.7h0M1650.1 860.7h0M1695.5 860.7h0M1567.1 858.8h0M1627.5 858.8h0M1652.0 858.8h0M1670.9 858.8h0M1655.8 856.9h0M1582.2 855.0h0M1621.8 855.0h0M1627.5 855.0h0M1593.5 853.1h0M1623.7 853.1h0M1614.3 851.3h0M1635.0 851.3h0M1661.5 851.3h0M1674.7 851.3h0M1625.6 849.4h0M1644.5 849.4h0M1657.7 849.4h0M1597.3 847.5h0M1576.5 843.7h0M1580.3 843.7h0M1595.4 839.9h0M1669.0 839.9h0M1672.8 839.9h0M1618.0 838.0h0M1676.6 838.0h0M1606.7 834.3h0M1674.7 822.9h0M1602.9 821.0h0M1669.0 798.4h0M1701.1 790.8h0" stroke="#081cd0" stroke-width="3.0" stroke-linecap="square" fill="none"/>
<path d="M1484 923L1484 880L1490.5 880L1489.8 919.5Z" fill="#d4260f"/>
<path d="M1489.5 884.6L1499.6 884.6L1506 893L1513.3 904.3L1515.7 915L1515.7 923L1489.5 923Z" fill="url(#og)"/>
<ellipse cx="1692.5" cy="259.5" rx="3.2" ry="2.6" fill="#fcb47e"/>
<ellipse cx="1622.3" cy="285.4" rx="4.8" ry="5.8" fill="#fcb47e"/>
<ellipse cx="1691.0" cy="409.5" rx="4.6" ry="3.4" fill="#fcb47e"/>
<ellipse cx="1623.8" cy="434.4" rx="5.6" ry="4.4" fill="#fcb47e"/>
<ellipse cx="1617.8" cy="483.8" rx="6.6" ry="4.0" fill="#dc9b6c"/>
<ellipse cx="1693.0" cy="720.5" rx="4.2" ry="3.2" fill="#fdcb8f"/>
<ellipse cx="1701.0" cy="633.8" rx="3.0" ry="5.0" fill="#fdcb8f"/>
<ellipse cx="1483.5" cy="211.8" rx="6.5" ry="9.0" fill="#fdc184"/>
<path d="M1530.7 166.0C1528.8 167.3 1519.7 175.0 1514.8 177.4C1509.9 179.8 1492.1 183.3 1489.9 185.9C1487.8 188.4 1493.7 196.7 1496.9 198.8C1500.1 201.0 1514.2 201.8 1516.8 203.8C1519.4 205.8 1518.2 211.9 1518.3 215.7C1518.4 219.6 1520.1 231.2 1517.8 235.7C1515.5 240.1 1503.1 250.3 1498.9 252.6C1494.7 254.8 1484.9 254.2 1483.0 254.4" fill="none" stroke="#fcb47e" stroke-width="4.3" stroke-linejoin="round" stroke-linecap="butt"/>
<path d="M1568.1 166.0C1567.3 168.0 1563.0 177.6 1561.6 182.9C1560.2 188.2 1558.2 204.9 1556.6 209.8C1555.1 214.7 1550.6 220.6 1548.7 223.7C1546.7 226.8 1541.9 231.4 1540.7 235.7C1539.5 240.0 1539.3 253.7 1538.7 259.5C1538.1 265.4 1536.3 280.7 1535.7 284.4C1535.1 288.1 1536.0 288.4 1533.7 290.4C1531.5 292.4 1519.4 299.1 1516.8 301.3C1514.2 303.6 1512.5 307.6 1511.8 309.0C1511.1 310.3 1510.5 310.1 1510.8 312.9C1511.1 315.8 1513.9 327.4 1514.3 332.8C1514.7 338.3 1516.3 352.8 1514.3 358.7C1512.3 364.7 1499.1 377.4 1497.4 382.6C1495.7 387.9 1499.6 399.3 1499.9 402.5C1500.2 405.8 1501.9 405.1 1499.9 409.5C1497.9 413.9 1485.0 435.8 1483.0 439.4" fill="none" stroke="#e8a172" stroke-width="4.4" stroke-linejoin="round" stroke-linecap="butt"/>
<path d="M1483.0 559.5C1484.5 556.1 1493.8 537.6 1495.4 531.6C1497.0 525.6 1494.7 515.4 1496.4 509.7C1498.1 503.9 1507.1 489.8 1509.3 483.8C1511.6 477.8 1513.2 467.0 1514.8 459.9C1516.4 452.8 1521.2 431.7 1522.8 424.4C1524.3 417.2 1526.3 405.6 1527.8 399.5C1529.2 393.5 1533.3 378.9 1534.7 373.7C1536.2 368.4 1538.5 361.6 1539.7 355.7C1540.9 349.9 1543.4 330.4 1544.7 324.9C1546.0 319.4 1549.6 313.3 1550.7 310.0C1551.7 306.7 1552.7 300.3 1553.6 297.4C1554.6 294.4 1557.3 287.9 1558.6 285.4C1559.9 282.9 1563.4 277.9 1564.6 276.5C1565.8 275.0 1567.6 273.4 1568.6 273.5C1569.5 273.6 1571.8 275.5 1572.6 277.5C1573.3 279.4 1574.3 285.3 1574.5 289.4C1574.8 293.5 1574.2 307.7 1574.5 311.9C1574.9 316.2 1577.1 322.1 1577.5 324.9C1578.0 327.6 1578.9 331.9 1578.5 334.8C1578.2 337.8 1575.1 346.8 1574.5 349.8C1573.9 352.8 1573.4 356.6 1573.5 359.7C1573.7 362.8 1574.9 370.9 1575.5 375.7C1576.1 380.4 1578.0 393.7 1578.5 399.5C1579.0 405.4 1579.5 418.4 1579.5 424.4C1579.5 430.5 1578.7 443.3 1578.5 450.0C1578.3 456.6 1577.9 472.6 1578.0 479.8C1578.1 487.0 1579.6 502.5 1579.5 509.7C1579.5 516.8 1577.7 532.4 1577.5 539.5C1577.3 546.7 1577.8 563.1 1578.0 569.4C1578.2 575.7 1578.8 587.7 1579.0 591.9C1579.3 596.2 1580.3 600.3 1580.0 604.9C1579.8 609.4 1577.0 623.8 1577.0 629.8C1577.1 635.7 1580.0 648.7 1580.5 654.7C1581.0 660.6 1581.1 673.6 1581.0 679.5C1580.9 685.5 1579.8 698.4 1579.5 704.4C1579.2 710.5 1578.7 725.7 1578.7 730.0C1578.7 734.2 1578.9 735.7 1579.5 739.9C1580.1 744.1 1582.3 758.2 1583.5 764.8C1584.7 771.4 1588.3 788.7 1589.5 794.7C1590.7 800.6 1592.4 809.9 1593.5 814.6C1594.5 819.2 1595.9 829.9 1598.4 833.5C1600.9 837.1 1610.1 841.9 1614.4 844.4C1618.7 846.9 1629.1 852.6 1634.3 854.4C1639.4 856.2 1652.4 857.6 1657.2 859.4C1661.9 861.1 1670.3 867.1 1674.1 868.8C1677.9 870.6 1686.3 872.2 1689.0 873.8C1691.8 875.4 1696.4 879.9 1697.0 881.8C1697.6 883.7 1695.5 887.3 1694.0 889.7C1692.4 892.1 1687.9 897.5 1684.0 901.7C1680.2 905.9 1664.8 921.8 1662.1 924.6" fill="none" stroke="#c98b62" stroke-width="4.4" stroke-linejoin="round" stroke-linecap="butt"/>
<path d="M1483.0 669.6C1484.2 664.8 1490.9 637.5 1492.9 629.8C1494.9 622.0 1498.3 611.5 1499.9 604.9C1501.4 598.2 1504.8 579.8 1505.9 574.4C1506.9 568.9 1507.2 564.2 1508.8 559.5C1510.5 554.7 1517.9 541.1 1519.8 534.6C1521.7 528.0 1523.3 511.9 1524.8 504.7C1526.2 497.5 1529.3 479.9 1531.7 474.8C1534.1 469.8 1542.4 464.7 1544.7 462.9C1546.9 461.0 1549.8 458.6 1550.7 459.4C1551.5 460.2 1551.9 465.0 1552.1 469.9C1552.4 474.7 1552.6 491.4 1552.6 499.7C1552.6 508.1 1552.3 531.2 1552.1 539.5C1552.0 547.9 1551.7 561.6 1551.6 569.4C1551.6 577.2 1551.5 597.6 1551.4 604.9C1551.4 612.1 1551.1 620.8 1551.1 629.8C1551.2 638.7 1552.1 668.8 1552.1 679.5C1552.2 690.3 1551.8 710.9 1551.6 719.4C1551.5 727.8 1550.7 740.2 1550.7 749.9C1550.7 759.5 1551.3 790.7 1551.6 799.6C1552.0 808.6 1552.9 819.7 1553.6 824.5C1554.4 829.3 1555.9 835.5 1557.6 839.5C1559.3 843.4 1564.3 854.9 1567.6 857.4C1570.8 859.8 1578.9 858.6 1584.5 859.9C1590.1 861.1 1607.2 865.7 1614.4 867.8C1621.5 870.0 1639.0 876.1 1644.2 877.8C1649.5 879.5 1657.0 879.7 1658.2 881.8C1659.4 883.8 1655.8 891.4 1654.2 894.7C1652.5 898.0 1647.3 906.1 1644.2 909.6C1641.1 913.2 1630.2 922.8 1628.3 924.6" fill="none" stroke="#a87350" stroke-width="4.5" stroke-linejoin="round" stroke-linecap="butt"/>
<path d="M1483.0 753.8C1483.8 751.2 1488.5 737.9 1489.9 731.9C1491.4 726.0 1493.1 710.7 1494.9 704.4C1496.7 698.1 1503.1 684.9 1504.9 679.5C1506.7 674.2 1508.8 663.8 1509.8 659.6C1510.9 655.5 1512.7 646.7 1513.8 644.7C1514.9 642.7 1517.5 641.2 1518.8 642.7C1520.1 644.3 1523.9 653.2 1524.8 657.6C1525.7 662.1 1525.9 673.9 1526.3 679.5C1526.6 685.2 1527.5 697.2 1527.8 704.4C1528.0 711.7 1528.2 729.7 1528.3 739.9C1528.3 750.1 1528.4 778.9 1528.3 789.7C1528.1 800.4 1527.1 821.7 1526.8 829.5C1526.5 837.3 1525.7 850.7 1525.8 854.4C1525.8 858.0 1526.7 858.6 1527.3 859.9C1527.9 861.1 1529.3 863.6 1530.7 864.8C1532.2 866.0 1535.6 868.4 1539.7 869.8C1543.8 871.3 1559.2 875.4 1564.6 876.8C1570.0 878.2 1580.0 880.3 1584.5 881.8C1589.0 883.2 1599.1 886.7 1602.4 888.7C1605.8 890.8 1611.2 897.5 1612.4 898.7" fill="none" stroke="#7b5139" stroke-width="4.6" stroke-linejoin="round" stroke-linecap="butt"/>
<path d="M1483.0 819.5C1483.8 817.4 1488.5 806.2 1489.9 801.6C1491.4 797.1 1494.0 785.4 1494.9 781.7C1495.8 778.0 1496.8 771.1 1497.7 770.8C1498.6 770.4 1501.4 775.9 1502.4 778.7C1503.4 781.6 1505.1 791.0 1505.9 794.7C1506.6 798.4 1508.0 806.0 1508.3 809.6C1508.7 813.2 1508.9 820.3 1508.8 824.5C1508.8 828.7 1508.4 839.6 1507.8 844.4C1507.3 849.3 1505.1 860.6 1503.9 864.8C1502.7 869.1 1499.4 877.6 1497.9 879.8C1496.3 882.0 1491.8 882.8 1490.9 883.3" fill="none" stroke="#3f2718" stroke-width="4.7" stroke-linejoin="round" stroke-linecap="butt"/>
<path d="M1603.9 166.0C1603.8 171.2 1603.1 201.4 1603.4 209.8C1603.7 218.1 1606.4 229.7 1606.4 235.7C1606.4 241.6 1604.1 253.7 1603.4 259.5C1602.7 265.4 1600.7 278.4 1600.4 284.4C1600.2 290.5 1601.1 305.7 1601.4 310.0C1601.8 314.2 1602.6 316.9 1603.4 319.9C1604.2 322.9 1608.4 331.5 1608.4 334.8C1608.4 338.2 1604.2 344.8 1603.4 347.8C1602.6 350.8 1601.3 357.1 1601.4 359.7C1601.5 362.4 1602.7 366.7 1604.4 369.7C1606.1 372.7 1614.4 381.0 1615.4 384.6C1616.3 388.2 1613.1 394.8 1612.4 399.5C1611.7 404.3 1609.9 418.1 1609.4 424.4C1608.9 430.7 1608.5 447.7 1608.4 451.9C1608.3 456.2 1608.9 456.3 1608.4 459.9C1607.8 463.5 1604.0 476.4 1603.9 481.8C1603.8 487.2 1607.6 498.7 1607.9 504.7C1608.1 510.7 1605.4 525.2 1605.9 531.6C1606.4 537.9 1611.3 550.9 1611.9 557.5C1612.4 564.0 1610.7 581.8 1610.4 586.0C1610.1 590.1 1609.9 589.3 1609.4 591.9C1608.9 594.6 1604.7 602.9 1606.4 607.9C1608.1 612.9 1623.4 627.7 1623.3 633.8C1623.2 639.8 1606.5 652.5 1605.4 658.6C1604.3 664.7 1612.1 678.4 1614.4 684.5C1616.6 690.6 1622.5 704.2 1624.3 709.4C1626.2 714.6 1629.1 725.4 1629.8 728.0C1630.5 730.5 1630.5 727.4 1630.3 730.9C1630.1 734.5 1627.2 753.2 1628.3 757.8C1629.4 762.5 1637.5 766.9 1639.2 769.8C1641.0 772.6 1643.3 777.2 1643.2 781.7C1643.1 786.3 1636.6 804.7 1638.2 807.6C1639.9 810.5 1653.3 802.6 1657.2 805.6C1661.0 808.6 1666.9 828.4 1670.1 832.5C1673.3 836.5 1680.1 837.7 1684.0 839.5C1688.0 841.2 1700.7 846.5 1703.0 847.4" fill="none" stroke="#e8a172" stroke-width="4.4" stroke-linejoin="round" stroke-linecap="butt"/>
<path d="M1627.8 166.0C1626.9 168.0 1621.5 177.6 1620.3 182.9C1619.1 188.2 1617.7 205.4 1617.8 209.8C1618.0 214.2 1618.8 217.9 1621.3 219.7C1623.9 221.5 1636.5 222.9 1639.2 224.7C1642.0 226.5 1645.4 230.5 1644.2 234.7C1643.0 238.8 1630.0 254.8 1629.3 259.5C1628.6 264.3 1634.9 272.1 1638.2 274.5C1641.6 276.9 1652.7 277.2 1657.2 279.5C1661.6 281.7 1672.5 289.7 1675.1 293.4C1677.7 297.0 1679.1 305.2 1679.1 310.0C1679.1 314.7 1675.7 328.5 1675.1 332.8C1674.5 337.1 1674.3 345.8 1674.1 345.8C1673.8 345.8 1675.1 336.1 1673.1 332.8C1671.1 329.6 1660.6 318.7 1657.2 318.9C1653.7 319.2 1645.5 329.9 1644.2 334.8C1642.9 339.7 1646.9 353.8 1646.2 359.7C1645.5 365.7 1639.1 381.1 1638.2 384.6C1637.4 388.1 1637.0 388.8 1639.2 388.6C1641.5 388.4 1654.8 382.5 1657.2 382.6C1659.6 382.7 1658.4 387.0 1659.2 389.6C1659.9 392.2 1662.5 400.3 1663.1 404.5C1663.7 408.7 1664.4 419.0 1664.1 424.4C1663.9 429.9 1661.9 445.2 1661.1 450.0C1660.4 454.7 1660.2 459.8 1658.2 463.9C1656.1 468.0 1645.7 478.9 1644.2 483.8C1642.8 488.7 1646.3 498.7 1646.2 504.7C1646.1 510.7 1641.9 528.9 1643.2 533.6C1644.5 538.2 1653.5 544.2 1657.2 543.5C1660.9 542.8 1671.0 528.7 1674.1 527.6C1677.2 526.5 1683.3 530.9 1683.0 534.6C1682.8 538.3 1671.4 552.5 1672.1 558.5C1672.8 564.4 1688.1 578.5 1689.0 584.3C1690.0 590.1 1682.9 600.9 1680.1 606.9C1677.2 612.8 1664.1 627.5 1665.1 633.8C1666.2 640.0 1687.7 652.8 1689.0 658.6C1690.3 664.5 1677.6 675.2 1676.1 682.5C1674.5 689.8 1676.1 714.1 1676.1 719.4C1676.1 724.6 1676.2 724.1 1676.3 726.0C1676.4 727.8 1676.3 731.1 1677.1 734.9C1677.9 738.8 1681.3 752.9 1683.0 757.8C1684.8 762.7 1689.6 772.9 1692.0 775.7C1694.4 778.6 1701.6 781.0 1703.0 781.7" fill="none" stroke="#fcb47e" stroke-width="4.3" stroke-linejoin="round" stroke-linecap="butt"/>
<path d="M1703.0 169.0C1701.6 169.4 1694.6 171.0 1692.0 172.9C1689.4 174.9 1682.3 180.5 1681.1 184.9C1679.8 189.3 1681.1 203.7 1681.5 209.8C1682.0 215.9 1683.7 231.7 1685.0 235.7C1686.3 239.6 1690.3 242.4 1692.5 242.6C1694.6 242.9 1701.7 238.2 1703.0 237.6" fill="none" stroke="#fdcb8f" stroke-width="4.2" stroke-linejoin="round" stroke-linecap="butt"/>
<path d="M1674.1 248.6C1676.1 248.6 1682.0 257.8 1682.0 260.5C1682.0 263.3 1676.1 271.5 1674.1 271.5C1672.1 271.5 1665.6 263.3 1665.6 260.5C1665.6 257.8 1672.1 248.6 1674.1 248.6Z" fill="none" stroke="#fdcb8f" stroke-width="4.2" stroke-linejoin="round" stroke-linecap="butt"/>
<path d="M1703.0 263.5C1700.8 266.0 1686.9 278.9 1685.0 284.4C1683.1 290.0 1686.9 300.9 1687.0 310.0C1687.1 319.0 1688.2 350.8 1686.0 359.7C1683.9 368.7 1670.5 380.4 1669.1 384.6C1667.7 388.8 1671.2 393.5 1674.1 394.6C1677.0 395.6 1689.5 391.5 1693.0 393.1C1696.5 394.6 1701.8 405.8 1703.0 407.5" fill="none" stroke="#fdcb8f" stroke-width="4.2" stroke-linejoin="round" stroke-linecap="butt"/>
<path d="M1703.0 495.2C1701.5 494.8 1693.0 493.1 1691.0 491.8C1689.0 490.4 1687.0 487.6 1686.0 483.8C1685.1 480.0 1684.4 464.0 1683.0 459.9C1681.7 455.8 1676.3 450.0 1674.6 450.0C1672.9 450.0 1670.4 455.8 1669.1 459.9C1667.9 464.0 1662.9 477.8 1664.1 483.8C1665.3 489.8 1676.0 505.5 1679.1 509.7C1682.2 513.9 1687.1 517.1 1690.0 518.6C1692.9 520.2 1701.4 522.1 1703.0 522.6" fill="none" stroke="#fdcb8f" stroke-width="4.2" stroke-linejoin="round" stroke-linecap="butt"/>
<path d="M1703.0 546.0C1701.8 546.3 1694.9 547.0 1693.0 548.5C1691.1 550.0 1687.0 556.2 1687.0 558.5C1687.0 560.7 1691.1 566.2 1693.0 567.4C1694.9 568.6 1701.8 568.1 1703.0 568.2" fill="none" stroke="#fdcb8f" stroke-width="4.2" stroke-linejoin="round" stroke-linecap="butt"/>
<path d="M1703.0 676.1C1701.7 675.8 1694.4 673.1 1692.5 674.1C1690.6 675.1 1687.8 680.9 1687.0 684.5C1686.2 688.2 1685.7 700.2 1686.0 704.4C1686.4 708.6 1689.1 717.2 1690.0 719.4C1691.0 721.5 1692.4 724.0 1694.0 722.3C1695.5 720.7 1701.9 707.5 1703.0 705.4" fill="none" stroke="#fdcb8f" stroke-width="4.2" stroke-linejoin="round" stroke-linecap="butt"/>
<path d="M1514.8 924.6C1514.8 921.8 1512.9 905.6 1514.8 901.7C1516.7 897.7 1526.2 892.7 1530.7 891.7C1535.3 890.8 1547.4 892.5 1552.6 893.7C1557.9 894.9 1571.0 900.5 1574.5 901.7C1578.1 902.9 1581.5 903.4 1582.5 903.7" fill="none" stroke="#4a2c1a" stroke-width="5.0" stroke-linejoin="round" stroke-linecap="butt"/>
<path d="M1564.6 924.6C1565.8 923.4 1571.8 916.3 1574.5 914.6C1577.3 912.9 1585.9 911.1 1587.5 910.6" fill="none" stroke="#4a2c1a" stroke-width="4.8" stroke-linejoin="round" stroke-linecap="butt"/>
<path d="M1599.4 924.6C1600.6 923.1 1606.6 914.8 1609.4 912.6C1612.1 910.5 1620.8 907.4 1622.3 906.6" fill="none" stroke="#7b5139" stroke-width="4.6" stroke-linejoin="round" stroke-linecap="butt"/>
<path d="M1484.0 923.0L1575.2 167.0" stroke="#ff2a12" stroke-width="4.4" fill="none"/>
<path d="M1484.0 921.5L1701.2 888.6" stroke="#1433ff" stroke-width="5" fill="none"/>
<path d="M1528.2 910.6q0 -7.5 9.5 -7.5q8.5 0 9.5 4.5q-6 -2.2 -11.5 0q-3 2 -1.5 6.5z" fill="#000"/>
<ellipse cx="1534.7" cy="918.1" rx="2.4" ry="1" fill="#000"/>
</g></g>
<rect x="1484.0" y="167.0" width="217.20000000000005" height="756.0" fill="none" stroke="#000" stroke-width="2"/>
<path d="M1483.0 923.0h-9.5" stroke="#000" stroke-width="2"/>
<path d="M1483.0 791.4h-9.5" stroke="#000" stroke-width="2"/>
<path d="M1483.0 657.1h-9.5" stroke="#000" stroke-width="2"/>
<path d="M1483.0 525.3h-9.5" stroke="#000" stroke-width="2"/>
<path d="M1483.0 391.1h-9.5" stroke="#000" stroke-width="2"/>
<path d="M1483.0 259.2h-9.5" stroke="#000" stroke-width="2"/>
<path d="M1484.0 924.0v9.5" stroke="#000" stroke-width="2"/>
<path d="M1615.9 924.0v9.5" stroke="#000" stroke-width="2"/>
</svg>
<span class="t dv" style="left:1414.70px;top:243.00px;font:400 25.130890052356px/33px 'DejaVu Sans',sans-serif;letter-spacing:-1.600px;color:#1c1c1c;">500</span>
<span class="t dv" style="left:1414.70px;top:375.00px;font:400 25.130890052356px/33px 'DejaVu Sans',sans-serif;letter-spacing:-1.600px;color:#1c1c1c;">400</span>
<span class="t dv" style="left:1414.70px;top:509.00px;font:400 25.130890052356px/33px 'DejaVu Sans',sans-serif;letter-spacing:-1.600px;color:#1c1c1c;">300</span>
<span class="t dv" style="left:1414.70px;top:641.00px;font:400 25.130890052356px/33px 'DejaVu Sans',sans-serif;letter-spacing:-1.600px;color:#1c1c1c;">200</span>
<span class="t dv" style="left:1417.20px;top:777.00px;font:400 23.82198952879579px/31px 'DejaVu Sans',sans-serif;letter-spacing:-1.600px;color:#1c1c1c;">100</span>
<span class="t dv" style="left:1449.22px;top:907.00px;font:400 25.2px/33px 'DejaVu Sans',sans-serif;letter-spacing:0.000px;color:#1c1c1c;">0</span>
<span class="t dv" style="left:1475.72px;top:936.00px;font:400 25.2px/33px 'DejaVu Sans',sans-serif;letter-spacing:0.000px;color:#1c1c1c;">0</span>
<span class="t dv" style="left:1593.00px;top:937.00px;font:400 24.607329842931914px/32px 'DejaVu Sans',sans-serif;letter-spacing:-1.600px;color:#1c1c1c;">100</span>
<span class="t dv" style="left:1525.50px;top:972.00px;font:400 26px/34px 'DejaVu Sans',sans-serif;letter-spacing:-0.270px;color:#1c1c1c;">Channel 1</span>
<span class="t dv" style="left:0;top:0;transform-origin:0 0;transform:translate(1371.30px,609.90px) rotate(-90deg);font:400 26px/34px 'DejaVu Sans',sans-serif;letter-spacing:-0.370px;color:#1c1c1c;">Channel 2</span>
<span class="t" style="left:678.60px;top:1038.00px;font:400 20.8px/27px 'Liberation Sans',sans-serif;letter-spacing:0.503px;color:#111;">Fluorophores</span>
<div class="b grp" style="left:658.70px;top:1064.20px;width:898.00px;height:292.20px;"></div>
<div class="b" style="left:684.30px;top:1090.10px;width:846.30px;height:186.20px;background:#fff;border:1.5px solid #b4b4b4;"></div>
<div class="b" style="left:685.80px;top:1091.60px;width:843.30px;height:32.40px;background:#f6f6f6;border-bottom:1.4px solid #dcdcdc;"></div>
<div class="b" style="left:687.30px;top:1098.30px;width:3.20px;height:20.70px;background:#dadada;"></div>
<div class="b" style="left:837.80px;top:1098.30px;width:3.20px;height:20.70px;background:#dadada;"></div>
<div class="b" style="left:988.40px;top:1098.30px;width:3.20px;height:20.70px;background:#dadada;"></div>
<div class="b" style="left:1139.60px;top:1098.30px;width:3.20px;height:20.70px;background:#dadada;"></div>
<div class="b" style="left:1252.70px;top:1098.30px;width:3.20px;height:20.70px;background:#dadada;"></div>
<div class="b" style="left:1365.80px;top:1098.30px;width:3.20px;height:20.70px;background:#dadada;"></div>
<div class="b" style="left:1526.60px;top:1098.30px;width:3.20px;height:20.70px;background:#dadada;"></div>
<span class="t" style="left:694.80px;top:1096.00px;font:400 20.8px/27px 'Liberation Sans',sans-serif;letter-spacing:-0.028px;color:#111;">Name</span>
<span class="t" style="left:846.10px;top:1096.00px;font:400 20.8px/27px 'Liberation Sans',sans-serif;letter-spacing:0.547px;color:#111;">Ag/(Ag + Ar)</span>
<span class="t" style="left:997.10px;top:1096.00px;font:400 20.8px/27px 'Liberation Sans',sans-serif;letter-spacing:0.355px;color:#111;"># Events</span>
<span class="t" style="left:1147.70px;top:1096.00px;font:400 20.8px/27px 'Liberation Sans',sans-serif;letter-spacing:0.456px;color:#111;">dx</span>
<span class="t" style="left:1261.30px;top:1096.00px;font:400 20.8px/27px 'Liberation Sans',sans-serif;letter-spacing:0.456px;color:#111;">dy</span>
<span class="t" style="left:1374.20px;top:1096.00px;font:400 20.8px/27px 'Liberation Sans',sans-serif;letter-spacing:-0.044px;color:#111;">dz</span>
<span class="t" style="left:687.80px;top:1127.00px;font:400 24.4px/32px 'Liberation Sans',sans-serif;letter-spacing:0.645px;color:#8b0000;">Junctophi...</span>
<span class="t" style="left:838.60px;top:1127.00px;font:400 24.4px/32px 'Liberation Sans',sans-serif;letter-spacing:2.242px;color:#8b0000;">0.110</span>
<span class="t" style="left:990.90px;top:1127.00px;font:400 24.4px/32px 'Liberation Sans',sans-serif;letter-spacing:1.999px;color:#8b0000;">118701</span>
<span class="t" style="left:687.80px;top:1165.00px;font:400 22.467866323907455px/29px 'Liberation Sans',sans-serif;letter-spacing:-0.350px;color:#00008b;">RyR</span>
<span class="t" style="left:838.60px;top:1163.00px;font:400 24.4px/32px 'Liberation Sans',sans-serif;letter-spacing:1.785px;color:#00008b;">0.870</span>
<span class="t" style="left:989.70px;top:1163.00px;font:400 24.4px/32px 'Liberation Sans',sans-serif;letter-spacing:2.192px;color:#00008b;">91038</span>
<div class="b btn" style="left:1029.50px;top:1297.90px;width:156.00px;height:36.30px;"></div>
<span class="t" style="left:1073.00px;top:1300.00px;font:400 24.4px/32px 'Liberation Sans',sans-serif;letter-spacing:-0.329px;color:#000;">Guess</span>
<span class="t" style="left:1609.30px;top:1038.00px;font:400 20.8px/27px 'Liberation Sans',sans-serif;letter-spacing:0.589px;color:#111;">Channel Assignment</span>
<div class="b grp" style="left:1587.40px;top:1064.20px;width:357.60px;height:148.60px;"></div>
<span class="t" style="left:1616.00px;top:1094.00px;font:400 24.4px/32px 'Liberation Sans',sans-serif;letter-spacing:-0.312px;color:#000;">p_dye:</span>
<div class="b inp" style="left:1733.20px;top:1090.10px;width:186.70px;height:38.80px;"></div>
<span class="t" style="left:1740.40px;top:1097.00px;font:400 24.6px/32px 'Liberation Sans',sans-serif;letter-spacing:1.610px;color:#000;">0.100</span>
<span class="t" style="left:1616.00px;top:1154.00px;font:400 24.4px/32px 'Liberation Sans',sans-serif;letter-spacing:0.179px;color:#000;">p_other:</span>
<div class="b inp" style="left:1733.20px;top:1150.50px;width:186.70px;height:39.10px;"></div>
<span class="t" style="left:1740.40px;top:1157.00px;font:400 24.6px/32px 'Liberation Sans',sans-serif;letter-spacing:1.610px;color:#000;">0.100</span>
</body></html>
